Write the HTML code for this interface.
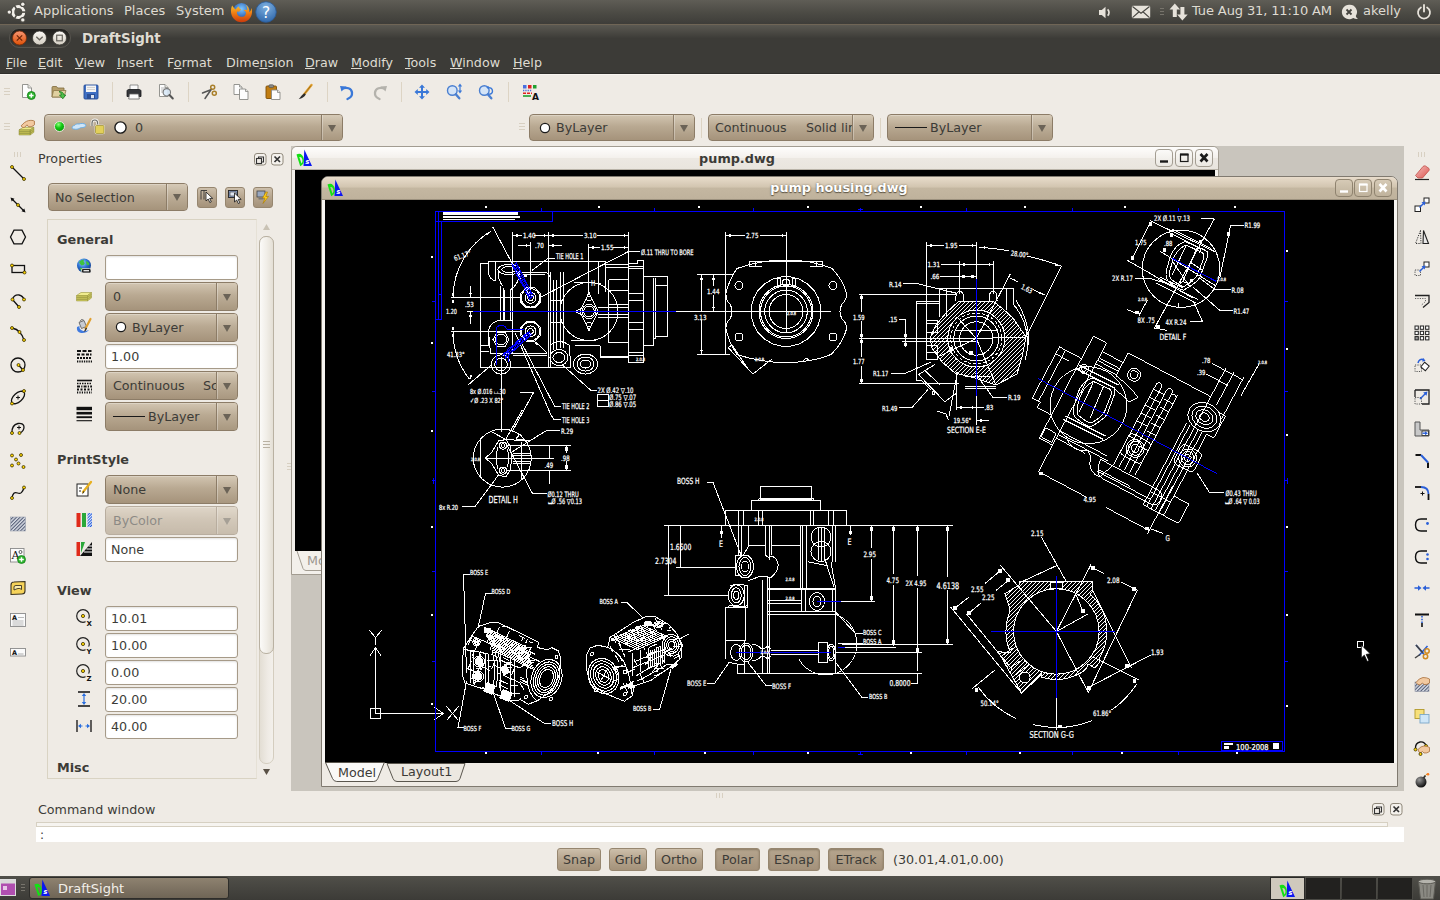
<!DOCTYPE html>
<html><head><meta charset="utf-8"><title>DraftSight</title>
<style>
*{box-sizing:border-box;margin:0;padding:0}
html,body{width:1440px;height:900px;overflow:hidden;background:#efebe5;font-family:"DejaVu Sans","Liberation Sans",sans-serif;font-size:12.7px;color:#3c3b37}
.abs{position:absolute}
#toppanel{left:0;top:0;width:1440px;height:24px;background:linear-gradient(#5f5d56,#4b4a44 55%,#3e3d39);color:#dfdbd2;font-size:13px}
#toppanel span{position:absolute;top:3px;white-space:nowrap}
#titlebar{left:0;top:24px;width:1440px;height:26px;background:linear-gradient(#5b5952,#3c3b37 54%);border-top:1px solid #6f6556}
#titlebar b{position:absolute;left:82px;top:6px;font-size:13.4px;color:#dfdbd2}
#menubar{left:0;top:50px;width:1440px;height:24px;background:#3c3b37;border-bottom:1px solid #2f2e2b;box-shadow:0 1px 0 #f8f5f0;color:#dfdbd2;font-size:12.7px}
#menubar span{position:absolute;top:5px}
#menubar u{text-decoration:underline}
.combo{position:absolute;border:1px solid #8c7c67;border-radius:4px;background:linear-gradient(#d2c5b1,#b9a992 45%,#a5937b);color:#3c3b37;font-size:12.7px;white-space:nowrap;overflow:hidden;box-shadow:inset 0 1px 0 rgba(255,255,255,.25)}
.combo .arr{position:absolute;right:0;top:0;bottom:0;width:21px;border-left:1px solid #8c7c67;box-shadow:inset 1px 0 0 rgba(255,255,255,.3);background:linear-gradient(#d6cab7,#bdae98 45%,#a99880);z-index:2}
.combo .arr:after{content:"";position:absolute;left:6px;top:50%;margin-top:-3px;border:4px solid transparent;border-top:7px solid #6b6357;border-bottom:0}
.combo .t{position:absolute;top:50%;transform:translateY(-50%);margin-top:-.5px}
.inp{position:absolute;border:1px solid #a69a88;border-radius:3px;background:#fff;font-size:12.7px;padding:4px 0 0 5px;box-shadow:inset 0 1px 2px rgba(0,0,0,.12)}
.btn{position:absolute;border:1px solid #96866f;border-radius:3px;background:linear-gradient(#cdbfab,#b5a48d 50%,#a4927a);font-size:12.7px;text-align:center;color:#3c3b37}
.grip-h{position:absolute;width:6px;height:9px;background:repeating-linear-gradient(#d8d0c2 0 1px,transparent 1px 3px)}
.grip-v{position:absolute;width:9px;height:5px;background:repeating-linear-gradient(90deg,#d8d0c2 0 1px,transparent 1px 3px)}
.hd{position:absolute;font-weight:bold;font-size:12.8px;left:57px}
svg{position:absolute;overflow:visible}
</style></head><body>

<!-- TOP PANEL -->
<div id="toppanel" class="abs">
<span style="left:34px">Applications</span><span style="left:124px">Places</span><span style="left:176px">System</span>
<span style="left:1192px;letter-spacing:-0.12px">Tue Aug 31, 11:10 AM</span><span style="left:1363px">akelly</span>
</div>

<!-- TITLE BAR -->
<div id="titlebar" class="abs"><b>DraftSight</b></div>

<!-- MENU BAR -->
<div id="menubar" class="abs">
<span style="left:6px"><u>F</u>ile</span><span style="left:38px"><u>E</u>dit</span><span style="left:75px"><u>V</u>iew</span><span style="left:117px"><u>I</u>nsert</span><span style="left:167px">F<u>o</u>rmat</span><span style="left:226px">Dime<u>n</u>sion</span><span style="left:305px"><u>D</u>raw</span><span style="left:351px"><u>M</u>odify</span><span style="left:405px"><u>T</u>ools</span><span style="left:450px"><u>W</u>indow</span><span style="left:513px"><u>H</u>elp</span>
</div>

<!-- TOOLBAR 2 combos -->
<div class="combo" style="left:44px;top:114px;width:299px;height:27px"><span class="t" style="left:90px">0</span><div class="arr"></div></div>
<div class="combo" style="left:529px;top:114px;width:166px;height:27px"><span class="t" style="left:26px">ByLayer</span><div class="arr"></div></div>
<div class="combo" style="left:708px;top:114px;width:166px;height:27px"><span class="t" style="left:6px">Continuous</span><span class="t" style="left:97px">Solid lin</span><div class="arr"></div></div>
<div class="combo" style="left:887px;top:114px;width:166px;height:27px"><span class="t" style="left:42px">ByLayer</span><div class="arr"></div></div>

<!-- PROPERTIES PANEL -->
<div class="abs" style="left:38px;top:151px;font-size:12.7px">Properties</div>
<div class="combo" style="left:48px;top:183px;width:140px;height:28px"><span class="t" style="left:6px">No Selection</span><div class="arr"></div></div>
<div class="abs" style="left:47px;top:219px;width:210px;height:560px;border:1px solid #d9d3c3;border-right-color:#e6e1d6"></div>
<div class="hd" style="top:232px">General</div>
<div class="inp" style="left:105px;top:255px;width:133px;height:25px"></div>
<div class="combo" style="left:105px;top:282px;width:133px;height:29px"><span class="t" style="left:7px">0</span><div class="arr"></div></div>
<div class="combo" style="left:105px;top:313px;width:133px;height:29px"><span class="t" style="left:26px">ByLayer</span><div class="arr"></div></div>
<div class="inp" style="left:105px;top:344px;width:133px;height:25px">1.00</div>
<div class="combo" style="left:105px;top:371px;width:133px;height:29px"><span class="t" style="left:7px">Continuous</span><span class="t" style="left:97px">Sc</span><div class="arr"></div></div>
<div class="combo" style="left:105px;top:402px;width:133px;height:29px"><span class="t" style="left:42px">ByLayer</span><div class="arr"></div></div>
<div class="hd" style="top:452px">PrintStyle</div>
<div class="combo" style="left:105px;top:475px;width:133px;height:29px"><span class="t" style="left:7px">None</span><div class="arr"></div></div>
<div class="combo" style="left:105px;top:506px;width:133px;height:29px;opacity:.55"><span class="t" style="left:7px">ByColor</span><div class="arr"></div></div>
<div class="inp" style="left:105px;top:537px;width:133px;height:25px">None</div>
<div class="hd" style="top:583px">View</div>
<div class="inp" style="left:105px;top:606px;width:133px;height:25px">10.01</div>
<div class="inp" style="left:105px;top:633px;width:133px;height:25px">10.00</div>
<div class="inp" style="left:105px;top:660px;width:133px;height:25px">0.00</div>
<div class="inp" style="left:105px;top:687px;width:133px;height:25px">20.00</div>
<div class="inp" style="left:105px;top:714px;width:133px;height:25px">40.00</div>
<div class="hd" style="top:760px">Misc</div>

<!-- MDI AREA -->
<div class="abs" style="left:291px;top:146px;width:1113px;height:645px;background:#c9c5bd"></div>
<!-- pump.dwg window -->
<div class="abs" style="left:291px;top:146px;width:928px;height:429px;background:#f3f0eb;border:1px solid #a29c91;border-radius:6px 6px 0 0"></div>
<div class="abs" style="left:292px;top:147px;width:926px;height:23px;background:linear-gradient(#fefdfc,#f4f1ed 48%,#ece8e2 52%,#e9e5de);border-bottom:1px solid #b9b3a8;border-radius:5px 5px 0 0;text-align:center;font-weight:bold;font-size:12.8px;padding-top:4px;padding-right:36px">pump.dwg</div>
<div class="abs" style="left:295px;top:170px;width:920px;height:381px;background:#000"></div>
<svg style="left:296px;top:148.5px" width="17" height="18" viewBox="0 0 17 18"><path d="M8.300 0.500l7.700 16.500h-8.500z" fill="#0a18f0"/><path d="M0.500 5.500c3.500-2 6.500 0 7.300 4.500 0.600 3.500-0.800 6-3.600 7.300zM3.300 8l2.200 6.500c1-1.200 1.200-2.800 0.700-4.500-0.500-1.500-1.500-2.300-2.900-2z" fill="#14e014" fill-rule="evenodd"/><text x="9.300" y="15" font-size="7" font-weight="bold" font-style="italic" fill="#fff" font-family="DejaVu Sans,Liberation Sans,sans-serif">s</text></svg><div class="abs" style="left:1155px;top:149px;width:18px;height:18px;border:1px solid #a39d92;border-radius:4px;background:linear-gradient(#fbfaf8,#ebe8e2)"><svg style="left:-1px;top:-1px" width="17" height="17" viewBox="0 0 17 17"><path d="M5 12.500h8" stroke="#1a1a1a" stroke-width="2.400"/></svg></div><div class="abs" style="left:1174.8px;top:149px;width:18px;height:18px;border:1px solid #a39d92;border-radius:4px;background:linear-gradient(#fbfaf8,#ebe8e2)"><svg style="left:-1px;top:-1px" width="17" height="17" viewBox="0 0 17 17"><rect x="5.500" y="5.500" width="7.500" height="7" fill="none" stroke="#1a1a1a" stroke-width="1.200"/><path d="M5 5.500h8.500" stroke="#1a1a1a" stroke-width="2.200"/></svg></div><div class="abs" style="left:1194.6px;top:149px;width:18px;height:18px;border:1px solid #a39d92;border-radius:4px;background:linear-gradient(#fbfaf8,#ebe8e2)"><svg style="left:-1px;top:-1px" width="17" height="17" viewBox="0 0 17 17"><path d="M5.500 5l7 7.500m0-7.500l-7 7.500" stroke="#1a1a1a" stroke-width="2.600"/></svg></div>
<svg style="left:295px;top:551px" width="30" height="22" viewBox="0 0 30 22"><path d="M2 0l6 17.500q1 2 3 2h19" fill="none" stroke="#a39d92" stroke-width="1"/></svg>
<div class="abs" style="left:307px;top:553px;font-size:12.7px;color:#9a968e;width:14px;overflow:hidden">Mo</div>
<!-- pump housing.dwg window -->
<div class="abs" style="left:321px;top:176px;width:1077px;height:611px;background:#efebe5;border:1px solid #807a70;border-radius:7px 7px 0 0"></div>
<div class="abs" style="left:322px;top:177px;width:1075px;height:23px;background:linear-gradient(#e8dccb,#d2c5b0 46%,#c4b7a1 50%,#bfb29c);border-bottom:1px solid #9b907d;border-radius:6px 6px 0 0;text-align:center;font-weight:bold;font-size:12.8px;color:#fff;padding-top:3px;padding-right:41px;text-shadow:0 1px 1px #5e5545,0 0 2px #7a6f5c">pump housing.dwg</div>
<div class="abs" style="left:322px;top:200px;width:1075px;height:563px;background:#f8f6f2"></div>
<div id="canvas" class="abs" style="left:325px;top:200px;width:1069px;height:562.5px;background:#000"></div>
<svg style="left:326.5px;top:178.5px" width="17" height="18" viewBox="0 0 17 18"><path d="M8.300 0.500l7.700 16.500h-8.500z" fill="#0a18f0"/><path d="M0.500 5.500c3.500-2 6.500 0 7.300 4.500 0.600 3.500-0.800 6-3.600 7.300zM3.300 8l2.200 6.500c1-1.200 1.200-2.800 0.700-4.500-0.500-1.500-1.500-2.300-2.900-2z" fill="#14e014" fill-rule="evenodd"/><text x="9.300" y="15" font-size="7" font-weight="bold" font-style="italic" fill="#fff" font-family="DejaVu Sans,Liberation Sans,sans-serif">s</text></svg><div class="abs" style="left:1334.5px;top:179px;width:18px;height:18px;border:1px solid #8f836f;border-radius:4px;background:linear-gradient(#d6cab6,#bfb29c)"><svg style="left:-1px;top:-1px" width="17" height="17" viewBox="0 0 17 17"><path d="M5 12.500h8" stroke="#fff" stroke-width="2.400"/></svg></div><div class="abs" style="left:1354.3px;top:179px;width:18px;height:18px;border:1px solid #8f836f;border-radius:4px;background:linear-gradient(#d6cab6,#bfb29c)"><svg style="left:-1px;top:-1px" width="17" height="17" viewBox="0 0 17 17"><rect x="5.500" y="5.500" width="7.500" height="7" fill="none" stroke="#fff" stroke-width="1.200"/><path d="M5 5.500h8.500" stroke="#fff" stroke-width="2.200"/></svg></div><div class="abs" style="left:1374.1px;top:179px;width:18px;height:18px;border:1px solid #8f836f;border-radius:4px;background:linear-gradient(#d6cab6,#bfb29c)"><svg style="left:-1px;top:-1px" width="17" height="17" viewBox="0 0 17 17"><path d="M5.500 5l7 7.500m0-7.500l-7 7.500" stroke="#fff" stroke-width="2.600"/></svg></div>
<svg style="left:324px;top:762px" width="150" height="24" viewBox="0 0 150 24"><path d="M63 1.500h78l-5 15q-1 3-4 3h-59q-3 0-4-3z" fill="#ece8e1" stroke="#5a564e" stroke-width="1"/><path d="M1.500 0.500l7 16q1.300 3 4.300 3h37q3 0 4-3l6.500-16z" fill="#faf9f7" stroke="#5a564e" stroke-width="1"/></svg>
<div class="abs" style="left:338px;top:764.5px;font-size:12.7px">Model</div>
<div class="abs" style="left:401px;top:764px;font-size:12.7px">Layout1</div>
<div class="grip-v" style="left:716px;top:793px"></div>
<div class="abs" style="left:287px;top:463px;width:4px;height:9px;background:repeating-linear-gradient(#d8d0c2 0 1px,transparent 1px 3px)"></div>

<!-- COMMAND WINDOW -->
<div class="abs" style="left:38px;top:802px;font-size:12.7px">Command window</div>
<div class="abs" style="left:36px;top:822px;width:1352px;height:5px;border:1px solid #d6d0c2;background:#f6f4f0"></div>
<div class="abs" style="left:36px;top:827px;width:1368px;height:15px;background:#fff;font-size:12px;line-height:17px;padding-left:4px">:</div>

<!-- STATUS BAR -->
<div class="btn" style="left:557px;top:848px;width:44px;height:23px;padding-top:3px">Snap</div>
<div class="btn" style="left:609px;top:848px;width:38px;height:23px;padding-top:3px">Grid</div>
<div class="btn" style="left:655px;top:848px;width:48px;height:23px;padding-top:3px">Ortho</div>
<div class="btn" style="background:linear-gradient(#b5a58e,#ad9c85 50%,#a3917a);box-shadow:inset 0 1px 2px rgba(60,45,25,.35);left:715px;top:848px;width:45px;height:23px;padding-top:3px">Polar</div>
<div class="btn" style="background:linear-gradient(#b5a58e,#ad9c85 50%,#a3917a);box-shadow:inset 0 1px 2px rgba(60,45,25,.35);left:768px;top:848px;width:52px;height:23px;padding-top:3px">ESnap</div>
<div class="btn" style="background:linear-gradient(#b5a58e,#ad9c85 50%,#a3917a);box-shadow:inset 0 1px 2px rgba(60,45,25,.35);left:828px;top:848px;width:56px;height:23px;padding-top:3px">ETrack</div>
<div class="abs" style="left:893px;top:852px;font-size:12.7px">(30.01,4.01,0.00)</div>

<!-- BOTTOM PANEL -->
<div class="abs" style="left:0;top:876px;width:1440px;height:24px;background:linear-gradient(#504f49,#3c3b37)"></div>
<div class="abs" style="left:29px;top:877px;width:200px;height:22px;border-radius:3px;background:linear-gradient(#8e8270,#6f6556);border:1px solid #2e2d2a"></div>
<div class="abs" style="left:58px;top:880.5px;font-size:13px;color:#f2efe9">DraftSight</div>



<!-- ICONS -->
<svg style="left:0px;top:0px" width="30" height="24" viewBox="0 0 30 24"><circle cx="18.3" cy="12.1" r="5.500" fill="none" stroke="#f2efe9" stroke-width="3"/><path d="M21.80 12.10L26.30 12.10" stroke="#4e4c46" stroke-width="1.600"/><path d="M16.55 9.07L14.30 5.17" stroke="#4e4c46" stroke-width="1.600"/><path d="M16.55 15.13L14.30 19.03" stroke="#4e4c46" stroke-width="1.600"/><circle cx="9.30" cy="12.10" r="2.800" fill="#4e4c46"/><circle cx="9.30" cy="12.10" r="1.700" fill="#f2efe9"/><circle cx="22.80" cy="4.31" r="2.800" fill="#4e4c46"/><circle cx="22.80" cy="4.31" r="1.700" fill="#f2efe9"/><circle cx="22.80" cy="19.89" r="2.800" fill="#4e4c46"/><circle cx="22.80" cy="19.89" r="1.700" fill="#f2efe9"/></svg>
<svg style="left:229px;top:0px" width="24" height="24" viewBox="0 0 24 24"><defs><radialGradient id="ffg" cx=".5" cy=".35" r=".6"><stop offset="0" stop-color="#7fc8ff"/><stop offset="1" stop-color="#1c4fa8"/></radialGradient><linearGradient id="ffo" x1="0" y1="0" x2="0" y2="1"><stop offset="0" stop-color="#f7c530"/><stop offset=".5" stop-color="#ee7a12"/><stop offset="1" stop-color="#c93a0c"/></linearGradient></defs><circle cx="12.5" cy="11.5" r="8.6" fill="url(#ffg)"/><path d="M3.2 5.5c-2 4-1.600 9.500 1.600 13.200 3.600 4.200 10.200 4.700 14.400 1.300 3.600-3 4.700-7.800 3.200-12-.2 2-1 3.300-2 4.300.3-3.200-1.300-6.200-4-7.600 1.600 1.700 2.200 3.800 1.800 5.500-1.200-.6-2.800-.5-3.800.4 1.800.2 2.800 1.600 2.400 3.300-.5 2.200-3 3.400-5.400 2.800-2.600-.7-3.900-3-3.400-5.200l2.200.3c.4-.9 1.200-1.700 2-2.100-1.300-.5-2.300-1.800-2.300-3.100-1.400.6-2.500 1.700-3 3-1-.8-2.700-2.200-3.700-4.100z" fill="url(#ffo)"/></svg>
<svg style="left:255px;top:1px" width="22" height="22" viewBox="0 0 22 22"><defs><radialGradient id="hpg" cx=".5" cy=".25" r=".8"><stop offset="0" stop-color="#7eb0e0"/><stop offset="1" stop-color="#2c64a8"/></radialGradient></defs><circle cx="11" cy="11" r="10.3" fill="url(#hpg)" stroke="#2a5a98" stroke-width=".8"/><text x="11" y="16.5" text-anchor="middle" font-family="DejaVu Sans,Liberation Sans,sans-serif" font-size="15.5" fill="#fff">?</text></svg>
<svg style="left:1098px;top:5px" width="15" height="15" viewBox="0 0 15 15"><path d="M1 5h2.800l3.700-3.300v11.600l-3.700-3.300h-2.800z" fill="#e6e2da"/><path d="M9.600 4.300a4.300 4.300 0 0 1 0 6.400" fill="none" stroke="#e6e2da" stroke-width="1.700"/></svg>
<svg style="left:1131px;top:5px" width="20" height="14" viewBox="0 0 20 14"><rect x=".8" y=".8" width="18.400" height="12.400" rx="1.200" fill="#e6e2da"/><path d="M1.500 1.500l8.500 6.700 8.500-6.700M1.500 12.600l6.300-5.600M18.500 12.600l-6.300-5.600" fill="none" stroke="#45443f" stroke-width="1.100"/></svg>
<div class="abs" style="left:1160px;top:8px;width:4px;height:9px;background:repeating-linear-gradient(#77746c 0 1px,transparent 1px 3px)"></div>
<svg style="left:1169px;top:3px" width="19" height="18" viewBox="0 0 19 18"><path d="M5.800 .5l5.300 6h-3.300v7.500h-4v-7.500h-3.300zM13.400 17.500l-5.300-6h3.300v-7.500h4v7.500h3.300z" fill="#e6e2da"/></svg>
<svg style="left:1341px;top:4px" width="18" height="17" viewBox="0 0 18 17"><path d="M8 .8a7.200 7.200 0 1 0 4.200 13.100c1.400.9 3 1.300 5 1.100-1.300-.8-2-1.900-2.400-3.100a7.200 7.200 0 0 0-6.800-11.100z" fill="#e6e2da"/><path d="M5.500 5.500l5 5m0-5l-5 5" stroke="#45443f" stroke-width="1.800"/></svg>
<svg style="left:1416px;top:4px" width="16" height="16" viewBox="0 0 16 16"><path d="M4.900 3.500a6 6 0 1 0 6.200 0" fill="none" stroke="#e6e2da" stroke-width="1.800" stroke-linecap="round"/><path d="M8 1v6.500" stroke="#e6e2da" stroke-width="1.900" stroke-linecap="round"/></svg>
<svg style="left:9px;top:28px" width="62" height="20" viewBox="0 0 62 20"><defs><linearGradient id="tbp" x1="0" y1="0" x2="0" y2="1"><stop offset="0" stop-color="#1f1e1c"/><stop offset="1" stop-color="#403f3a"/></linearGradient><linearGradient id="tbc" x1="0" y1="0" x2="0" y2="1"><stop offset="0" stop-color="#f79674"/><stop offset="1" stop-color="#df5106"/></linearGradient><linearGradient id="tbm" x1="0" y1="0" x2="0" y2="1"><stop offset="0" stop-color="#fbf9f6"/><stop offset="1" stop-color="#d3cdc1"/></linearGradient></defs><rect x=".5" y=".5" width="61" height="19" rx="9.500" fill="url(#tbp)" stroke="#5e5c55" stroke-width=".8"/><circle cx="10.500" cy="10" r="7" fill="url(#tbc)" stroke="#7a2c08" stroke-width=".8"/><path d="M7.800 7.300l5.400 5.400m0-5.400l-5.400 5.400" stroke="#6b2408" stroke-width="1.200"/><circle cx="30.500" cy="10" r="7" fill="url(#tbm)" stroke="#3a3934" stroke-width=".8"/><path d="M27.300 8.800l3.200 3 3.200-3" fill="none" stroke="#66635c" stroke-width="1.300"/><circle cx="50.500" cy="10" r="7" fill="url(#tbm)" stroke="#3a3934" stroke-width=".8"/><rect x="47.700" y="7.200" width="5.600" height="5.600" fill="none" stroke="#66635c" stroke-width="1.200"/></svg>
<div class="grip-h" style="left:4px;top:88px"></div>
<div class="grip-h" style="left:4px;top:123px"></div>
<div class="abs" style="left:112px;top:82px;width:1px;height:20px;background:#ddd4c4"></div>
<div class="abs" style="left:188px;top:82px;width:1px;height:20px;background:#ddd4c4"></div>
<div class="abs" style="left:327px;top:82px;width:1px;height:20px;background:#ddd4c4"></div>
<div class="abs" style="left:401px;top:82px;width:1px;height:20px;background:#ddd4c4"></div>
<div class="abs" style="left:508px;top:82px;width:1px;height:20px;background:#ddd4c4"></div>
<svg style="left:20.0px;top:84.0px" width="16" height="16" viewBox="0 0 16 16"><path d="M2.5 0.5h5.5l3.5 3.5v9.5h-9z" fill="#fdfdfd" stroke="#8a8a86" stroke-width=".9"/><path d="M8.0 0.5v3.5h3.5" fill="#e4e4e0" stroke="#8a8a86" stroke-width=".8"/><circle cx="11.300" cy="11.500" r="4" fill="#2fb52f" stroke="#0f7a14" stroke-width=".8"/><path d="M11.300 9.200v4.600M9 11.500h4.600" stroke="#fff" stroke-width="1.500"/></svg>
<svg style="left:51.0px;top:84.0px" width="16" height="16" viewBox="0 0 16 16"><path d="M1 3.500c0-.6.400-1 1-1h3.500l1.200 1.500h6.300v9h-12z" fill="#b7a06c" stroke="#7d6a3c" stroke-width=".8"/><path d="M2.500 6.500h12.500l-2 6.500h-12z" fill="#e0d0a0" stroke="#8a7648" stroke-width=".8"/><path d="M8 7.500c2.500 0 4.500 1 5 3.500h1.800l-3 3.800-3.300-3.800h1.900c-.2-1.600-1-2.500-2.400-3.500z" fill="#4fc04a" stroke="#1d7a22" stroke-width=".8"/></svg>
<svg style="left:83.0px;top:84.0px" width="16" height="16" viewBox="0 0 16 16"><rect x="1" y="1" width="14" height="14" rx="1" fill="#3f6fc4" stroke="#244a94" stroke-width=".9"/><rect x="3" y="1.500" width="10" height="6.500" fill="#f4f4f4"/><path d="M4 3.500h8M4 5.500h8" stroke="#c9c9c9" stroke-width=".8"/><rect x="4" y="10" width="8" height="5" fill="#2b4f96"/><rect x="8" y="11" width="3" height="3.200" fill="#dfe6f2"/></svg>
<svg style="left:126.0px;top:84.0px" width="16" height="16" viewBox="0 0 16 16"><path d="M4 1h8v5h-8z" fill="#fafafa" stroke="#777" stroke-width=".8"/><path d="M1 7.200c0-1 .8-1.700 1.700-1.700h10.600c1 0 1.700.8 1.700 1.700v5.300h-14z" fill="#34363a" stroke="#17181a" stroke-width=".8"/><path d="M3.500 10h9l.8 5h-10.600z" fill="#fdfdfd" stroke="#666" stroke-width=".8"/></svg>
<svg style="left:158.0px;top:84.0px" width="16" height="16" viewBox="0 0 16 16"><path d="M1.5 0.5h5.5l3 3v9h-8.5z" fill="#fdfdfd" stroke="#8a8a86" stroke-width=".9"/><path d="M7.0 0.5v3h3" fill="#e4e4e0" stroke="#8a8a86" stroke-width=".8"/><path d="M3 4h4M3 6h3M3 8h3" stroke="#aaa" stroke-width=".8"/><circle cx="8.800" cy="8.300" r="3.700" fill="#d6e6f6" fill-opacity=".85" stroke="#777" stroke-width="1.100"/><path d="M11.500 11l3.300 3.500" stroke="#555" stroke-width="2" stroke-linecap="round"/></svg>
<svg style="left:201.0px;top:84.0px" width="16" height="16" viewBox="0 0 16 16"><path d="M1.500 9l9-3.500M4 14.500l6.500-9.500" stroke="#555" stroke-width="1.500" stroke-linecap="round"/><circle cx="11.700" cy="3.300" r="2" fill="none" stroke="#a97f2a" stroke-width="1.500"/><circle cx="13.300" cy="9.300" r="2" fill="none" stroke="#a97f2a" stroke-width="1.500"/></svg>
<svg style="left:233.0px;top:84.0px" width="16" height="16" viewBox="0 0 16 16"><path d="M1 0.5h5.5l2.5 2.5v7.5h-8z" fill="#fdfdfd" stroke="#8a8a86" stroke-width=".9"/><path d="M6.5 0.5v2.5h2.5" fill="#e4e4e0" stroke="#8a8a86" stroke-width=".8"/><path d="M6.5 5h6.0l2.5 2.5v8.0h-8.5z" fill="#fdfdfd" stroke="#8a8a86" stroke-width=".9"/><path d="M12.5 5v2.5h2.5" fill="#e4e4e0" stroke="#8a8a86" stroke-width=".8"/></svg>
<svg style="left:265.0px;top:84.0px" width="16" height="16" viewBox="0 0 16 16"><rect x="1" y="2" width="10.500" height="12.500" rx="1" fill="#c17d11" stroke="#7e4f08" stroke-width=".9"/><rect x="4" y=".8" width="4.500" height="2.800" rx=".8" fill="#8a8a86" stroke="#555" stroke-width=".7"/><path d="M6.5 6h6.0l2.5 2.5v7.0h-8.5z" fill="#fdfdfd" stroke="#8a8a86" stroke-width=".9"/><path d="M12.5 6v2.5h2.5" fill="#e4e4e0" stroke="#8a8a86" stroke-width=".8"/></svg>
<svg style="left:297.0px;top:84.0px" width="16" height="16" viewBox="0 0 16 16"><path d="M14.500 1l-7.500 9.500" stroke="#e0a030" stroke-width="2.400" stroke-linecap="round"/><path d="M14 1.500l-7 9" stroke="#8a5a10" stroke-width=".7"/><path d="M7.600 9.300l1.200 1.200c-1.500 2.500-3.800 4-7 4.500 1.800-1.500 2.300-3.700 5.800-5.700z" fill="#2e2e2e"/></svg>
<svg style="left:339.0px;top:84.0px" width="16" height="16" viewBox="0 0 16 16"><path d="M3.500 4.500c4-1.500 9-.5 9.500 4 .4 3.500-2 5.500-4.500 6.500" fill="none" stroke="#3a78d8" stroke-width="2.300" stroke-linecap="round"/><path d="M1 2l6.500.5-5 5z" fill="#3a78d8"/></svg>
<svg style="left:372.0px;top:84.0px" width="16" height="16" viewBox="0 0 16 16"><path d="M12.500 4.500c-4-1.500-9-.5-9.500 4-.4 3.500 2 5.500 4.500 6.500" fill="none" stroke="#b4b2ac" stroke-width="2.300" stroke-linecap="round"/><path d="M15 2l-6.500.5 5 5z" fill="#b4b2ac"/></svg>
<svg style="left:414.0px;top:84.0px" width="16" height="16" viewBox="0 0 16 16"><path d="M8 .5l3 3.300h-2v3.200h3.200v-2l3.300 3-3.300 3v-2h-3.200v3.200h2l-3 3.300-3-3.300h2v-3.200h-3.200v2l-3.300-3 3.300-3v2h3.200v-3.200h-2z" fill="#3a78d8"/></svg>
<svg style="left:446.0px;top:84.0px" width="16" height="16" viewBox="0 0 16 16"><circle cx="6.300" cy="6.500" r="4.800" fill="#d4e4f7" stroke="#4a7fd0" stroke-width="1.400"/><path d="M9.800 10.300l3.500 4" stroke="#4a7fd0" stroke-width="2.400" stroke-linecap="round"/><path d="M14 1v7M12.500 2.500l1.500-2 1.500 2M12.500 6.500l1.500 2 1.500-2" stroke="#3a78d8" stroke-width="1.200" fill="none"/></svg>
<svg style="left:478.0px;top:84.0px" width="16" height="16" viewBox="0 0 16 16"><circle cx="6.300" cy="6.500" r="4.800" fill="#d4e4f7" stroke="#4a7fd0" stroke-width="1.400"/><path d="M9.800 10.300l3.500 4" stroke="#4a7fd0" stroke-width="2.400" stroke-linecap="round"/><path d="M9.500 4c2.500-1 5 .500 5 3s-2 3.500-4 3" stroke="#3a78d8" stroke-width="1.400" fill="none"/><path d="M8 3l3-.8-.5 3z" fill="#3a78d8"/></svg>
<svg style="left:522.0px;top:84.0px" width="16" height="16" viewBox="0 0 16 16"><rect x="1" y="1" width="3.500" height="3.500" fill="#4a6fe0"/><rect x="6" y="1" width="3.500" height="3.500" fill="#e02020"/><rect x="11" y="1" width="3.500" height="3.500" fill="#20a030"/><path d="M1 6.500h9" stroke="#4a6fe0" stroke-width="1.300" stroke-dasharray="1.300 1"/><path d="M1 9.200h9" stroke="#e02020" stroke-width="1.500" stroke-dasharray="3 1"/><path d="M1 12h8" stroke="#20a030" stroke-width="1.600"/><text x="10" y="16" font-family="DejaVu Sans,Liberation Sans,sans-serif" font-weight="bold" font-size="9" fill="#111">A</text></svg>
<svg style="left:18.0px;top:119.0px" width="18" height="18" viewBox="0 0 17 17"><path d="M1 13.5l4-2.500h10l-3.500 2.500z" fill="#eeea88" stroke="#8f8c3a" stroke-width=".6"/><path d="M1 13.5v1.600h10.500v-1.600zM11.500 13.5l3.500-2.500v1.600l-3.500 2.500z" fill="#c9c55a" stroke="#8f8c3a" stroke-width=".5"/><path d="M1 11.9l4-2.500h10l-3.500 2.500z" fill="#eeea88" stroke="#8f8c3a" stroke-width=".6"/><path d="M1 11.9v1.600h10.500v-1.600zM11.500 11.9l3.500-2.500v1.600l-3.500 2.500z" fill="#c9c55a" stroke="#8f8c3a" stroke-width=".5"/><path d="M1 10.3l4-2.500h10l-3.500 2.500z" fill="#eeea88" stroke="#8f8c3a" stroke-width=".6"/><path d="M1 10.3v1.600h10.500v-1.600zM11.500 10.3l3.500-2.500v1.600l-3.500 2.500z" fill="#c9c55a" stroke="#8f8c3a" stroke-width=".5"/><path d="M3 6.500c2-2.500 4.500-4.500 7-5 2-.3 4.500-.3 5.500.5v3.500c-1.500 1.500-3.500 2-5.500 1.800l-1.500-1.800-2.500 2.500c-1 .3-2.500-.3-3-1.500z" fill="#f2c9a0" stroke="#a8703c" stroke-width=".8"/></svg>
<svg style="left:52px;top:119px" width="16" height="16" viewBox="0 0 16 16"><defs><radialGradient id="grn" cx=".4" cy=".3" r=".7"><stop offset="0" stop-color="#8cff7a"/><stop offset=".5" stop-color="#12c812"/><stop offset="1" stop-color="#0a9a0a"/></radialGradient></defs><circle cx="7.500" cy="7.500" r="5" fill="url(#grn)" stroke="#e9e4da" stroke-width="1"/></svg>
<svg style="left:71px;top:121px" width="16" height="12" viewBox="0 0 16 12"><path d="M1.500 7.500c-1-1.500.5-3 2-3 1-1.500 3-1.800 4.500-1.500 2-.8 5-.8 6.500.5.800 1 0 2.500-1.500 2.800-1.500.3-3.500.3-4.500 1-1.500 1-3.500 1.200-5 .8-1 0-1.700-.2-2-.600z" fill="#cfe5f7" stroke="#6aaee6" stroke-width="1"/></svg>
<svg style="left:90px;top:118px" width="16" height="18" viewBox="0 0 16 18"><path d="M2 8v-3c0-2 1.200-3 2.800-3s2.800 1 2.800 3v1.500" fill="none" stroke="#f3f1ec" stroke-width="2.800"/><path d="M2 8v-3c0-2 1.200-3 2.800-3s2.800 1 2.800 3v1.500" fill="none" stroke="#6e6e6a" stroke-width="1.200"/><rect x="5.500" y="7.500" width="8.500" height="8" rx="1" fill="#e2cf5a" stroke="#f3f1ec" stroke-width="1.600"/><rect x="5.500" y="7.500" width="8.500" height="8" rx="1" fill="#e2cf5a" stroke="#9a8a28" stroke-width=".7"/></svg>
<svg style="left:113px;top:120px" width="15" height="15" viewBox="0 0 15 15"><circle cx="7.500" cy="7.500" r="5.600" fill="#fff" stroke="#1a1a1a" stroke-width="1.400"/></svg>
<svg style="left:538px;top:121px" width="14" height="14" viewBox="0 0 14 14"><circle cx="7" cy="7" r="4.600" fill="#fff" stroke="#1a1a1a" stroke-width="1.200"/></svg>
<div class="abs" style="left:895px;top:127px;width:32px;height:1px;background:#1a1a1a"></div>
<div class="abs" style="left:701px;top:118px;width:1px;height:20px;background:#ddd4c4"></div>
<div class="abs" style="left:880px;top:118px;width:1px;height:20px;background:#ddd4c4"></div>
<div class="grip-h" style="left:519px;top:123px"></div>

<!-- TOOL STRIPS -->
<div class="grip-v" style="left:14px;top:152px"></div>
<div class="grip-v" style="left:1418px;top:152px"></div>
<svg style="left:10px;top:165px" width="16" height="16" viewBox="0 0 16 16"><path d="M2 2L14 14" stroke="#111" stroke-width="1.300" fill="none"/><circle cx="2" cy="2" r="1.500" fill="#ffd500" stroke="#3a3000" stroke-width=".8"/><circle cx="14" cy="14" r="1.500" fill="#ffd500" stroke="#3a3000" stroke-width=".8"/></svg>
<svg style="left:10px;top:197px" width="16" height="16" viewBox="0 0 16 16"><path d="M1.500 1.500L14.500 14.500" stroke="#111" stroke-width="1.300" fill="none"/><path d="M0.500 0.500l4 1.200-2.800 2.800zM15.500 15.500l-4-1.200 2.800-2.800z" fill="#111"/><circle cx="8" cy="8" r="1.500" fill="#ffd500" stroke="#3a3000" stroke-width=".8"/></svg>
<svg style="left:10px;top:229px" width="16" height="16" viewBox="0 0 16 16"><path d="M0.500 8L4 1.200h8L15.500 8L12 14.800h-8z" stroke="#111" stroke-width="1.300" fill="none"/></svg>
<svg style="left:10px;top:261px" width="16" height="16" viewBox="0 0 16 16"><rect x="2" y="4.500" width="12.500" height="7" stroke="#111" stroke-width="1.300" fill="none"/><circle cx="2" cy="4.5" r="1.500" fill="#ffd500" stroke="#3a3000" stroke-width=".8"/><circle cx="14.5" cy="11.5" r="1.500" fill="#ffd500" stroke="#3a3000" stroke-width=".8"/></svg>
<svg style="left:10px;top:293px" width="16" height="16" viewBox="0 0 16 16"><path d="M2.500 6.500Q4 1.500 9 2Q13 3 14 6.500M2.500 6.500L9 14" stroke="#111" stroke-width="1.300" fill="none"/><circle cx="2.5" cy="6.5" r="1.500" fill="#ffd500" stroke="#3a3000" stroke-width=".8"/><circle cx="14" cy="6.5" r="1.500" fill="#ffd500" stroke="#3a3000" stroke-width=".8"/><circle cx="9" cy="14" r="1.500" fill="#ffd500" stroke="#3a3000" stroke-width=".8"/></svg>
<svg style="left:10px;top:325px" width="16" height="16" viewBox="0 0 16 16"><path d="M2 3Q7 4 9.500 7Q12.500 10 14 15" stroke="#111" stroke-width="1.300" fill="none"/><circle cx="2" cy="3" r="1.500" fill="#ffd500" stroke="#3a3000" stroke-width=".8"/><circle cx="9.5" cy="7" r="1.500" fill="#ffd500" stroke="#3a3000" stroke-width=".8"/><circle cx="14" cy="15" r="1.500" fill="#ffd500" stroke="#3a3000" stroke-width=".8"/></svg>
<svg style="left:10px;top:357px" width="16" height="16" viewBox="0 0 16 16"><circle cx="8" cy="8" r="7" stroke="#111" stroke-width="1.300" fill="none"/><path d="M8.500 8L13 13" stroke="#111" stroke-width="1.300" fill="none"/><circle cx="8.5" cy="8" r="1.500" fill="#ffd500" stroke="#3a3000" stroke-width=".8"/><circle cx="13" cy="13" r="1.500" fill="#ffd500" stroke="#3a3000" stroke-width=".8"/></svg>
<svg style="left:10px;top:389px" width="16" height="16" viewBox="0 0 16 16"><ellipse cx="8" cy="8.500" rx="8" ry="4.300" transform="rotate(-42 8 8.500)" stroke="#111" stroke-width="1.300" fill="none"/><path d="M8 6.500v4M6 8.500h4" stroke="#111" stroke-width="1"/><circle cx="14" cy="2" r="1.500" fill="#ffd500" stroke="#3a3000" stroke-width=".8"/><circle cx="2" cy="14.5" r="1.500" fill="#ffd500" stroke="#3a3000" stroke-width=".8"/></svg>
<svg style="left:10px;top:421px" width="16" height="16" viewBox="0 0 16 16"><path d="M2 12Q1.500 4 8 2.500Q14 2 14 6Q14 10 10 12" stroke="#111" stroke-width="1.300" fill="none"/><path d="M9 4.500v4M7 6.500h4" stroke="#111" stroke-width="1"/><circle cx="2" cy="12" r="1.500" fill="#ffd500" stroke="#3a3000" stroke-width=".8"/><circle cx="9.5" cy="12" r="1.500" fill="#ffd500" stroke="#3a3000" stroke-width=".8"/></svg>
<svg style="left:10px;top:453px" width="16" height="16" viewBox="0 0 16 16"><circle cx="2" cy="2.5" r="1.500" fill="#ffd500" stroke="#3a3000" stroke-width=".8"/><circle cx="11" cy="2" r="1.500" fill="#ffd500" stroke="#3a3000" stroke-width=".8"/><circle cx="2" cy="12.5" r="1.500" fill="#ffd500" stroke="#3a3000" stroke-width=".8"/><circle cx="8.5" cy="10.5" r="1.500" fill="#ffd500" stroke="#3a3000" stroke-width=".8"/><circle cx="13.5" cy="14" r="1.500" fill="#ffd500" stroke="#3a3000" stroke-width=".8"/><circle cx="6" cy="6.5" r="1.500" fill="#ffd500" stroke="#3a3000" stroke-width=".8"/></svg>
<svg style="left:10px;top:485px" width="16" height="16" viewBox="0 0 16 16"><path d="M2 13Q3 6 7.500 8Q12 10 14 2.500" stroke="#111" stroke-width="1.300" fill="none"/><circle cx="2" cy="13" r="1.500" fill="#ffd500" stroke="#3a3000" stroke-width=".8"/><circle cx="14" cy="2.5" r="1.500" fill="#ffd500" stroke="#3a3000" stroke-width=".8"/></svg>
<svg style="left:10px;top:516px" width="16" height="16" viewBox="0 0 16 16"><defs><pattern id="hat" width="2.500" height="2.500" patternUnits="userSpaceOnUse" patternTransform="rotate(-45)"><rect width="2.500" height="2.500" fill="#d5d9e2"/><rect width="2.500" height="1" fill="#4d5670"/></pattern></defs><rect x=".5" y="1" width="15" height="14" fill="url(#hat)" stroke="#9aa0b0" stroke-width=".6"/></svg>
<svg style="left:10px;top:548px" width="16" height="16" viewBox="0 0 16 16"><rect x=".5" y=".5" width="13.500" height="13.500" fill="#fbfbfb" stroke="#8a8a8a" stroke-width=".9"/><text x="1.500" y="11" font-size="11" font-family="DejaVu Serif,Liberation Serif,serif" fill="#111">A</text><circle cx="10.500" cy="4" r="1.500" fill="none" stroke="#333" stroke-width=".8"/><circle cx="11.500" cy="11.500" r="4" fill="#2fb52f" stroke="#0f7a14" stroke-width=".7"/><path d="M11.500 9.200v4.600M9.200 11.500h4.600" stroke="#fff" stroke-width="1.400"/></svg>
<svg style="left:10px;top:580px" width="16" height="16" viewBox="0 0 16 16"><path d="M1 5Q1 2 4 2L15 1.500L15 11Q15 14 12 14L1 14.500z" fill="#f6d35a" stroke="#3a3320" stroke-width="1.100"/><path d="M4 10L4 7Q4 5.500 6 5.500L11.500 5.500L11.500 9.500Q10 8 8 8.500Q6 9 4 10z" fill="#fbeeb0" stroke="#3a3320" stroke-width=".9"/></svg>
<svg style="left:10px;top:612px" width="16" height="16" viewBox="0 0 16 16"><rect x=".5" y="1.500" width="15" height="13" fill="#fbfbfb" stroke="#8a8a8a" stroke-width=".9"/><text x="2" y="7.500" font-size="6.500" font-weight="bold" font-family="DejaVu Sans,Liberation Sans,sans-serif" fill="#111">A</text><path d="M8 5.500h6M2.500 9h11M2.500 11h11M2.500 13h11" stroke="#aaa" stroke-width=".8"/></svg>
<svg style="left:10px;top:644px" width="16" height="16" viewBox="0 0 16 16"><rect x=".5" y="4.500" width="15" height="7.500" fill="#fbfbfb" stroke="#8a8a8a" stroke-width=".9"/><text x="2" y="10.500" font-size="6.500" font-weight="bold" font-family="DejaVu Sans,Liberation Sans,sans-serif" fill="#111">A</text><path d="M8 10h5.500" stroke="#999" stroke-width=".8"/></svg>
<svg style="left:1414px;top:165px" width="16" height="16" viewBox="0 0 16 16"><defs><linearGradient id="ers" x1="0" y1="0" x2="1" y2="1"><stop offset="0" stop-color="#f7c0bc"/><stop offset="1" stop-color="#d9534f"/></linearGradient></defs><path d="M1.500 10.500L9 1.500Q10 .5 11.500 1L15 3.500Q15.500 4.500 15 5.500L8.500 13H4z" fill="url(#ers)" stroke="#c0504a" stroke-width=".8"/><path d="M1 14.500h14" stroke="#222" stroke-width="1.200"/></svg>
<svg style="left:1414px;top:197px" width="16" height="16" viewBox="0 0 16 16"><rect x="1" y="9" width="5.500" height="5.500" fill="#fff" stroke="#222" stroke-width="1"/><rect x="10" y="1" width="5" height="5" fill="#fff" stroke="#222" stroke-width="1"/><path d="M5.500 10.500L10.500 5.500" stroke="#2a5fd8" stroke-width="1.500"/><path d="M11.500 4.500l-4 .8 3.200 3.200z" fill="#2a5fd8"/></svg>
<svg style="left:1414px;top:229px" width="16" height="16" viewBox="0 0 16 16"><path d="M6.500 1.500L7 14.500H1.500z" fill="none" stroke="#333" stroke-width="1" stroke-dasharray="1.200 1.200"/><path d="M9.500 1.500L14.500 14.500H9z" fill="#e8e8e8" stroke="#222" stroke-width="1.100"/></svg>
<svg style="left:1414px;top:261px" width="16" height="16" viewBox="0 0 16 16"><rect x="1" y="9" width="5.500" height="5.500" fill="none" stroke="#555" stroke-width="1" stroke-dasharray="1.200 1.200"/><rect x="10" y="1" width="5" height="5" fill="#fff" stroke="#222" stroke-width="1"/><path d="M5.500 10.500L10.500 5.500" stroke="#2a5fd8" stroke-width="1.500"/><path d="M11.500 4.500l-4 .8 3.200 3.200z" fill="#2a5fd8"/></svg>
<svg style="left:1414px;top:293px" width="16" height="16" viewBox="0 0 16 16"><path d="M1 2.500h14v7l-6 5" fill="none" stroke="#222" stroke-width="1.300"/><path d="M1 5.500h10.500v3l-4.500 4" fill="none" stroke="#666" stroke-width="1" stroke-dasharray="1.200 1.200"/></svg>
<svg style="left:1414px;top:325px" width="16" height="16" viewBox="0 0 16 16"><rect x="1.0" y="1.0" width="3.300" height="3.300" fill="#fff" stroke="#222" stroke-width="1"/><rect x="6.3" y="1.0" width="3.300" height="3.300" fill="#fff" stroke="#222" stroke-width="1"/><rect x="11.6" y="1.0" width="3.300" height="3.300" fill="#fff" stroke="#222" stroke-width="1"/><rect x="1.0" y="6.3" width="3.300" height="3.300" fill="#fff" stroke="#222" stroke-width="1"/><rect x="6.3" y="6.3" width="3.300" height="3.300" fill="#fff" stroke="#222" stroke-width="1"/><rect x="11.6" y="6.3" width="3.300" height="3.300" fill="#fff" stroke="#222" stroke-width="1"/><rect x="1.0" y="11.6" width="3.300" height="3.300" fill="#999" stroke="#222" stroke-width="1"/><rect x="6.3" y="11.6" width="3.300" height="3.300" fill="#fff" stroke="#222" stroke-width="1"/><rect x="11.6" y="11.6" width="3.300" height="3.300" fill="#fff" stroke="#222" stroke-width="1"/></svg>
<svg style="left:1414px;top:357px" width="16" height="16" viewBox="0 0 16 16"><rect x="1" y="8" width="6.500" height="6.500" fill="none" stroke="#555" stroke-width="1" stroke-dasharray="1.200 1.200"/><rect x="8" y="6.500" width="6" height="6" fill="#fff" stroke="#222" stroke-width="1" transform="rotate(40 11 9.500)"/><path d="M4 6Q5 1.500 9.500 2.500" fill="none" stroke="#2a5fd8" stroke-width="1.500"/><path d="M11.500 4l-3.500 .5 1.500-3.500z" fill="#2a5fd8"/></svg>
<svg style="left:1414px;top:389px" width="16" height="16" viewBox="0 0 16 16"><path d="M1 1h14v14h-7M1 1v7" fill="none" stroke="#222" stroke-width="1.300"/><rect x="1" y="8.500" width="6.500" height="6.500" fill="none" stroke="#555" stroke-width="1" stroke-dasharray="1.200 1.200"/><path d="M6 10L12 4" stroke="#2a5fd8" stroke-width="1.500"/><path d="M13.500 2.500l-4.300 1 3.300 3.300z" fill="#2a5fd8"/></svg>
<svg style="left:1414px;top:421px" width="16" height="16" viewBox="0 0 16 16"><path d="M1 1h5v8h9v6h-14z" fill="#c8c8c8" stroke="#555" stroke-width="1"/><rect x="8" y="10" width="6.500" height="4.500" fill="#fff" stroke="#222" stroke-width=".8"/><path d="M8.500 12.200h3.500" stroke="#2a5fd8" stroke-width="1.400"/><path d="M14 12.200l-3-2v4z" fill="#2a5fd8"/></svg>
<svg style="left:1414px;top:453px" width="16" height="16" viewBox="0 0 16 16"><path d="M1.500 2h5.500" stroke="#111" stroke-width="2"/><path d="M14 9.500v5.500" stroke="#111" stroke-width="2"/><path d="M7 2L14 9.500" stroke="#2a5fd8" stroke-width="2"/></svg>
<svg style="left:1414px;top:485px" width="16" height="16" viewBox="0 0 16 16"><path d="M1 2h6" stroke="#111" stroke-width="1.800"/><path d="M14.500 9v6" stroke="#111" stroke-width="1.800"/><path d="M7 2Q14.500 2 14.500 9" fill="none" stroke="#2a5fd8" stroke-width="1.800"/><path d="M8.500 6.500v4M6.500 8.500h4" stroke="#111" stroke-width="1"/></svg>
<svg style="left:1414px;top:517px" width="16" height="16" viewBox="0 0 16 16"><path d="M13 2H7Q1.500 2 1.500 8Q1.500 14 7 14h6" fill="none" stroke="#111" stroke-width="1.400"/><circle cx="13.500" cy="6.500" r="1.400" fill="#2a5fd8"/></svg>
<svg style="left:1414px;top:549px" width="16" height="16" viewBox="0 0 16 16"><path d="M13 2H7Q1.500 2 1.500 8Q1.500 14 7 14h6" fill="none" stroke="#111" stroke-width="1.400"/><circle cx="13.500" cy="5.500" r="1.300" fill="#2a5fd8"/><circle cx="13.500" cy="10" r="1.300" fill="#2a5fd8"/></svg>
<svg style="left:1414px;top:580px" width="16" height="16" viewBox="0 0 16 16"><path d="M0.500 8h4M15.500 8h-4" stroke="#2a5fd8" stroke-width="1.600"/><path d="M7.500 8l-3.500-2.700v5.400zM8.500 8l3.500-2.700v5.400z" fill="#2a5fd8"/></svg>
<svg style="left:1414px;top:612px" width="16" height="16" viewBox="0 0 16 16"><path d="M1 2.500h14" stroke="#111" stroke-width="2"/><path d="M8 4v7" stroke="#2a5fd8" stroke-width="1.600" stroke-dasharray="1.500 1.300"/><path d="M8 11v4" stroke="#111" stroke-width="1.600"/></svg>
<svg style="left:1414px;top:644px" width="16" height="16" viewBox="0 0 16 16"><path d="M2 1L10.500 11M13.500 2L5 11.500" stroke="#2a5fd8" stroke-width="1.600"/><path d="M2 1L9 9" stroke="#444" stroke-width="1.600"/><circle cx="11.500" cy="12.500" r="2.200" fill="none" stroke="#d08a20" stroke-width="1.500"/><circle cx="13" cy="7" r="2.200" fill="none" stroke="#d08a20" stroke-width="1.500"/><path d="M1 14l5-3.500" stroke="#444" stroke-width="1.500"/></svg>
<svg style="left:1414px;top:676px" width="16" height="16" viewBox="0 0 16 16"><rect x="1" y="6" width="14" height="9.500" fill="url(#hat)" stroke="#8a90a0" stroke-width=".6"/><path d="M2 6.500Q5 2 9 1.500Q13 1.500 15.500 3v4Q13 9 10 8.500L8.500 7L6 9Q3.500 9 2 6.500z" fill="#f2c9a0" stroke="#a8703c" stroke-width=".8"/></svg>
<svg style="left:1414px;top:708px" width="16" height="16" viewBox="0 0 16 16"><rect x="1" y="1.500" width="9" height="9" fill="#f7e07a" stroke="#b39a2a" stroke-width=".9"/><rect x="6" y="6.500" width="9" height="8.500" fill="#cfe6f7" stroke="#7aa7c8" stroke-width=".9"/></svg>
<svg style="left:1414px;top:740px" width="16" height="16" viewBox="0 0 16 16"><path d="M1.500 9Q1 3 6 2Q11 1.500 12 6" fill="none" stroke="#111" stroke-width="1.300"/><circle cx="1.5" cy="9.5" r="1.500" fill="#ffd500" stroke="#3a3000" stroke-width=".8"/><circle cx="12" cy="6" r="1.500" fill="#ffd500" stroke="#3a3000" stroke-width=".8"/><path d="M4 9.500Q7 6 10 6Q13.500 6 15.500 7.500v4Q13 13.500 10 13L8.500 11.500L6.500 13Q4.500 12.500 4 9.500z" fill="#f2c9a0" stroke="#a8703c" stroke-width=".8"/><circle cx="6.5" cy="14" r="1.500" fill="#ffd500" stroke="#3a3000" stroke-width=".8"/></svg>
<svg style="left:1414px;top:772px" width="16" height="16" viewBox="0 0 16 16"><defs><radialGradient id="bmb" cx=".35" cy=".3" r=".7"><stop offset="0" stop-color="#999"/><stop offset="1" stop-color="#111"/></radialGradient></defs><circle cx="7" cy="10" r="5.500" fill="url(#bmb)"/><path d="M9.500 6L11.500 3.500" stroke="#333" stroke-width="1.800"/><path d="M11.500 3.500Q12.500 1.500 14 2.500" stroke="#b8860b" stroke-width="1" fill="none"/><circle cx="14" cy="2.300" r="1.300" fill="#ff7a1a"/></svg>

<!-- PROP ICONS -->
<svg style="left:76px;top:258px" width="16" height="16" viewBox="0 0 16 16"><defs><radialGradient id="glb" cx=".4" cy=".3" r=".75"><stop offset="0" stop-color="#9ad0ff"/><stop offset=".5" stop-color="#2a6fd0"/><stop offset="1" stop-color="#123a86"/></radialGradient></defs><circle cx="8" cy="7.500" r="7" fill="url(#glb)"/><path d="M3 4Q5 1.500 8 1.500Q7 4 9 5Q8 7.500 5.500 7.500Q4 6 3 4zM10 3Q12.500 3.500 13.500 6Q12 8 11 7Q10 5 10 3zM4 10Q6 9 7 11L5.500 13.500Q4 12 4 10z" fill="#3fc23f"/><rect x="5.500" y="10.500" width="9.500" height="4.500" rx="1.500" fill="#222" stroke="#eee" stroke-width=".7"/><path d="M7.500 12.700h5.500" stroke="#eee" stroke-width="1.300"/></svg>
<svg style="left:76px;top:288px" width="16" height="16" viewBox="0 0 16 16"><path d="M.5 11.5l4.500-3h10.500l-4 3z" fill="#f0ec8e" stroke="#9a973e" stroke-width=".6"/><path d="M.5 11.5v1.500h11v-1.500zM11.500 11.5l4-3v1.500l-4 3z" fill="#cdc95e" stroke="#9a973e" stroke-width=".5"/><path d="M.5 9.5l4.500-3h10.500l-4 3z" fill="#f0ec8e" stroke="#9a973e" stroke-width=".6"/><path d="M.5 9.5v1.500h11v-1.500zM11.500 9.5l4-3v1.500l-4 3z" fill="#cdc95e" stroke="#9a973e" stroke-width=".5"/><path d="M.5 7.5l4.500-3h10.500l-4 3z" fill="#f0ec8e" stroke="#9a973e" stroke-width=".6"/><path d="M.5 7.5v1.500h11v-1.500zM11.500 7.5l4-3v1.500l-4 3z" fill="#cdc95e" stroke="#9a973e" stroke-width=".5"/></svg>
<svg style="left:76px;top:318px" width="16" height="16" viewBox="0 0 16 16"><path d="M1 9Q0 14 5 15Q10 15.500 13 12Q9 14 6 12.500Q3 11 3.500 8z" fill="#3f7ae0"/><path d="M3 4.500L8 2.500L10.500 8.500L5.500 10.500z" fill="#c8ccd2" stroke="#555" stroke-width=".8"/><path d="M4 3.500Q5 0.500 7.500 2" fill="none" stroke="#555" stroke-width=".9"/><path d="M14.500 1L9.500 10.500" stroke="#e0a030" stroke-width="2.200" stroke-linecap="round"/><path d="M9.800 9.500l1.300 .7Q10.500 13 7.500 14Q9 12 9.800 9.500z" fill="#333"/></svg>
<svg style="left:76px;top:348px" width="16" height="16" viewBox="0 0 16 16"><path d="M1 3h4M6.500 3h4M12 3h3.500" stroke="#111" stroke-width="1.800"/><path d="M1 6.500h3M5.500 6.500h3M10 6.500h3M14 6.500h1.500" stroke="#111" stroke-width="1.800"/><path d="M1 10h15" stroke="#111" stroke-width="1.800" stroke-dasharray="2 1"/><path d="M1 13.500h15" stroke="#111" stroke-width="1.800" stroke-dasharray="1.300 1"/></svg>
<svg style="left:76px;top:377.5px" width="16" height="16" viewBox="0 0 16 16"><path d="M1 2.500h15" stroke="#111" stroke-width="1.600"/><path d="M1 5.500h15" stroke="#111" stroke-width="1.600" stroke-dasharray="1.500 1"/><path d="M1 8.500h15" stroke="#111" stroke-width="1.800" stroke-dasharray="3 1.200 1.200 1.200"/><path d="M1 11.500h15" stroke="#111" stroke-width="1.800" stroke-dasharray="2 1.500"/><path d="M1 14.500h15" stroke="#111" stroke-width="1.800" stroke-dasharray="1.200 1.200"/></svg>
<svg style="left:76px;top:406px" width="16" height="16" viewBox="0 0 16 16"><path d="M.5 2.500h15.500" stroke="#111" stroke-width="3.400"/><path d="M.5 7.200h15.500" stroke="#111" stroke-width="2.600"/><path d="M.5 11.200h15.500" stroke="#111" stroke-width="1.900"/><path d="M.5 14.700h15.500" stroke="#111" stroke-width="1.100"/></svg>
<svg style="left:76px;top:481px" width="16" height="16" viewBox="0 0 16 16"><rect x="1" y="3" width="11" height="12" fill="#fff" stroke="#222" stroke-width="1"/><path d="M3 7h3M3 10h2" stroke="#222" stroke-width="1.200"/><path d="M15 1L7 11" stroke="#e8b020" stroke-width="2.300" stroke-linecap="round"/><path d="M7.500 10l1 .8-2.500 2.700z" fill="#222"/></svg>
<svg style="left:76px;top:512px" width="16" height="16" viewBox="0 0 16 16"><defs><pattern id="bh" width="2" height="2" patternUnits="userSpaceOnUse" patternTransform="rotate(-45)"><rect width="2" height="2" fill="#dfe8ff"/><rect width="2" height="1" fill="#2a5fd8"/></pattern></defs><rect x=".5" y="1" width="4" height="14" fill="#e02a1a"/><rect x="6" y="1" width="4" height="14" fill="#2aa83a"/><rect x="11.500" y="1" width="4.500" height="14" fill="url(#bh)"/></svg>
<svg style="left:76px;top:541px" width="16" height="16" viewBox="0 0 16 16"><rect x=".5" y="1" width="3.500" height="14" fill="#e02a1a"/><path d="M5 1h4L5 12z" fill="#2aa83a"/><path d="M16 1v14H4z" fill="#111"/><path d="M8 11h8M10.500 8h5.500M12.500 5h3.500" stroke="#fff" stroke-width="1"/></svg>
<svg style="left:75.5px;top:609px" width="17" height="17" viewBox="0 0 17 17"><circle cx="7" cy="7" r="6.300" fill="none" stroke="#222" stroke-width="1.200"/><circle cx="7" cy="7" r="1.600" fill="#ffd500" stroke="#3a3000" stroke-width=".8"/><rect x="9.500" y="9.500" width="7" height="7" fill="#efebe5"/><text x="10.500" y="16.500" font-size="7" font-weight="bold" font-family="DejaVu Sans,Liberation Sans,sans-serif" fill="#111">X</text></svg>
<svg style="left:75.5px;top:636.5px" width="17" height="17" viewBox="0 0 17 17"><circle cx="7" cy="7" r="6.300" fill="none" stroke="#222" stroke-width="1.200"/><circle cx="7" cy="7" r="1.600" fill="#ffd500" stroke="#3a3000" stroke-width=".8"/><rect x="9.500" y="9.500" width="7" height="7" fill="#efebe5"/><text x="10.500" y="16.500" font-size="7" font-weight="bold" font-family="DejaVu Sans,Liberation Sans,sans-serif" fill="#111">Y</text></svg>
<svg style="left:75.5px;top:663.5px" width="17" height="17" viewBox="0 0 17 17"><circle cx="7" cy="7" r="6.300" fill="none" stroke="#222" stroke-width="1.200"/><circle cx="7" cy="7" r="1.600" fill="#ffd500" stroke="#3a3000" stroke-width=".8"/><rect x="9.500" y="9.500" width="7" height="7" fill="#efebe5"/><text x="10.500" y="16.500" font-size="7" font-weight="bold" font-family="DejaVu Sans,Liberation Sans,sans-serif" fill="#111">Z</text></svg>
<svg style="left:76px;top:691px" width="16" height="16" viewBox="0 0 16 16"><path d="M2 1h12M2 15h12" stroke="#111" stroke-width="1.300"/><path d="M8 3.500v9" stroke="#2a6fe0" stroke-width="1.200"/><path d="M8 2l2.200 3h-4.400zM8 14l2.200-3h-4.400z" fill="#2a6fe0"/></svg>
<svg style="left:76px;top:718px" width="16" height="16" viewBox="0 0 16 16"><path d="M1 2v12M15 2v12" stroke="#111" stroke-width="1.300"/><path d="M3.500 8h3M9.500 8h3" stroke="#2a6fe0" stroke-width="1.200"/><path d="M2 8l3-2.200v4.400zM14 8l-3-2.200v4.400z" fill="#2a6fe0"/></svg>
<div class="btn" style="left:197px;top:187px;width:20px;height:21px;border-radius:3px"></div>
<div class="btn" style="left:225px;top:187px;width:20px;height:21px;border-radius:3px"></div>
<div class="btn" style="left:253px;top:187px;width:20px;height:21px;border-radius:3px"></div>
<svg style="left:199px;top:189px" width="16" height="16" viewBox="0 0 16 16"><path d="M2 1.500v9M5 1.500v9M2 1.500h6" stroke="#333" stroke-width=".9" fill="none"/><path d="M7 3l0 9 2.200-2 1.600 3.500 1.500-.7-1.600-3.400h3z" fill="#fff" stroke="#111" stroke-width=".8"/></svg>
<svg style="left:227px;top:189px" width="16" height="16" viewBox="0 0 16 16"><rect x="1.500" y="1.500" width="9" height="7" fill="#8aa0c8" stroke="#222" stroke-width=".9"/><rect x="3" y="3" width="6" height="4" fill="#dfe6f2" stroke="#333" stroke-width=".6"/><path d="M7.5 4l0 9 2.200-2 1.600 3.500 1.500-.7-1.600-3.400h3z" fill="#fff" stroke="#111" stroke-width=".8"/></svg>
<svg style="left:255px;top:189px" width="16" height="16" viewBox="0 0 16 16"><rect x="2" y="2" width="8" height="6" fill="#9aa8c0" stroke="#444" stroke-width=".8"/><rect x="3.500" y="9" width="5" height="1.500" fill="#777"/><path d="M11 3L7.500 9h2.500L8 14.500L13.500 7.500h-2.700L12.500 3z" fill="#ffcf1a" stroke="#a87800" stroke-width=".6"/></svg>
<svg style="left:253.5px;top:152.5px" width="13" height="13" viewBox="0 0 13 13"><rect x=".5" y=".5" width="11.500" height="11.500" rx="2.500" fill="#f4f1ec" stroke="#8f887b" stroke-width="1"/><path d="M4.500 6.500v-2.500h5v5h-2.500" fill="none" stroke="#333" stroke-width="1.100"/><rect x="2.500" y="5.500" width="5" height="5" fill="#efebe5" stroke="#333" stroke-width="1.100"/></svg>
<svg style="left:270.5px;top:152.5px" width="13" height="13" viewBox="0 0 13 13"><rect x=".5" y=".5" width="11.500" height="11.500" rx="2.500" fill="#f4f1ec" stroke="#8f887b" stroke-width="1"/><path d="M3.500 3.500l5.500 5.500m0-5.500l-5.500 5.500" stroke="#333" stroke-width="1.700"/></svg>
<svg style="left:1372px;top:803px" width="13" height="13" viewBox="0 0 13 13"><rect x=".5" y=".5" width="11.500" height="11.500" rx="2.500" fill="#f4f1ec" stroke="#8f887b" stroke-width="1"/><path d="M4.500 6.500v-2.500h5v5h-2.500" fill="none" stroke="#333" stroke-width="1.100"/><rect x="2.500" y="5.500" width="5" height="5" fill="#efebe5" stroke="#333" stroke-width="1.100"/></svg>
<svg style="left:1389.5px;top:803px" width="13" height="13" viewBox="0 0 13 13"><rect x=".5" y=".5" width="11.500" height="11.500" rx="2.500" fill="#f4f1ec" stroke="#8f887b" stroke-width="1"/><path d="M3.500 3.500l5.500 5.500m0-5.500l-5.500 5.500" stroke="#333" stroke-width="1.700"/></svg>
<div class="abs" style="left:259px;top:236px;width:15px;height:528px;border:1px solid #d4cdbf;border-radius:7px;background:linear-gradient(90deg,#e3ded4,#efebe5 60%,#f3f0eb)"></div>
<div class="abs" style="left:259px;top:236px;width:15px;height:418px;border:1px solid #b9b1a2;border-radius:7px;background:linear-gradient(90deg,#fbfaf8,#f1eee8 50%,#e4dfd5)"></div>
<div class="abs" style="left:263px;top:441px;width:7px;height:7px;background:repeating-linear-gradient(#b9b1a2 0 1px,transparent 1px 3px)"></div>
<svg style="left:262px;top:223px" width="9" height="8" viewBox="0 0 9 8"><path d="M4.500 1L8 7H1z" fill="#c9c2b4"/></svg>
<svg style="left:262px;top:768px" width="9" height="8" viewBox="0 0 9 8"><path d="M4.500 7L8 1H1z" fill="#5a5146"/></svg>
<svg style="left:114px;top:320px" width="14" height="14" viewBox="0 0 14 14"><circle cx="7" cy="7" r="4.600" fill="#fff" stroke="#1a1a1a" stroke-width="1.200"/></svg>
<div class="abs" style="left:113px;top:416px;width:32px;height:1px;background:#1a1a1a"></div>
<svg style="left:0;top:878px" width="16" height="20" viewBox="0 0 16 20"><rect x=".5" y="1.500" width="15" height="16" fill="#b04fb0" stroke="#ddd" stroke-width="1"/><rect x="1" y="2" width="14" height="3.500" fill="#d9d9d9"/><rect x="3" y="8" width="4" height="4" fill="#e8c8e8"/></svg>
<div class="abs" style="left:21px;top:884px;width:4px;height:9px;background:repeating-linear-gradient(#77746c 0 1px,transparent 1px 3px)"></div>
<svg style="left:34px;top:879px" width="17" height="18" viewBox="0 0 17 18"><path d="M8.300 0.500l7.700 16.500h-8.500z" fill="#0a18f0"/><path d="M0.500 5.500c3.500-2 6.500 0 7.300 4.500 0.600 3.500-0.800 6-3.600 7.300zM3.300 8l2.200 6.500c1-1.200 1.200-2.800 0.700-4.500-0.500-1.500-1.500-2.300-2.900-2z" fill="#14e014" fill-rule="evenodd"/><text x="9.300" y="15" font-size="7" font-weight="bold" font-style="italic" fill="#fff" font-family="DejaVu Sans,Liberation Sans,sans-serif">s</text></svg>
<div class="abs" style="left:1270px;top:877px;width:35px;height:23px;background:#cfc9bd;border:1px solid #2a2927"></div>
<svg style="left:1279px;top:880px" width="17" height="18" viewBox="0 0 17 18"><path d="M8.300 0.500l7.700 16.500h-8.500z" fill="#0a18f0"/><path d="M0.500 5.500c3.500-2 6.500 0 7.300 4.500 0.600 3.500-0.800 6-3.600 7.300zM3.300 8l2.200 6.500c1-1.200 1.200-2.800 0.700-4.500-0.500-1.500-1.500-2.300-2.900-2z" fill="#14e014" fill-rule="evenodd"/><text x="9.300" y="15" font-size="7" font-weight="bold" font-style="italic" fill="#fff" font-family="DejaVu Sans,Liberation Sans,sans-serif">s</text></svg>
<div class="abs" style="left:1306px;top:877px;width:35px;height:23px;background:#22211f;border:1px solid #4a4944;border-left:none"></div>
<div class="abs" style="left:1342px;top:877px;width:35px;height:23px;background:#22211f;border:1px solid #4a4944;border-left:none"></div>
<div class="abs" style="left:1378px;top:877px;width:35px;height:23px;background:#22211f;border:1px solid #4a4944;border-left:none"></div>
<svg style="left:1416px;top:877px" width="22" height="23" viewBox="0 0 22 23"><path d="M2.500 4.500h17l-2 17.500h-13z" fill="#8a8982" stroke="#5a5953" stroke-width="1"/><ellipse cx="11" cy="4.500" rx="8.500" ry="2.300" fill="#b5b4ad" stroke="#5a5953" stroke-width="1"/><path d="M7 8l1 12M11 8v12M15 8l-1 12" stroke="#6a6963" stroke-width="1"/></svg>

<!-- DRAWING -->
<svg style="left:0;top:0" width="1440" height="900" viewBox="0 0 1440 900" shape-rendering="crispEdges" fill="none" stroke-width="1">
<style>.f{fill:#fff;stroke:none}.bf{fill:#0000ff;stroke:none}</style>
<g stroke="#fff">
<path class="f" d="M443 212h75v2.500h-75zM443 215.500h77v2h-77zM443 218.500h72v1.500h-72z"/>
<rect class="f" x="485" y="206" width="2" height="2"/>
<rect class="f" x="598" y="206" width="2" height="2"/>
<rect class="f" x="698" y="206" width="2" height="2"/>
<rect class="f" x="807" y="206" width="2" height="2"/>
<rect class="f" x="920" y="206" width="2" height="2"/>
<rect class="f" x="1024" y="206" width="2" height="2"/>
<rect class="f" x="1124" y="206" width="2" height="2"/>
<rect class="f" x="1234" y="206" width="2" height="2"/>
<rect class="f" x="485" y="752" width="2" height="2"/>
<rect class="f" x="597" y="752" width="2" height="2"/>
<rect class="f" x="704" y="752" width="2" height="2"/>
<rect class="f" x="807" y="752" width="2" height="2"/>
<rect class="f" x="910" y="752" width="2" height="2"/>
<rect class="f" x="1019" y="752" width="2" height="2"/>
<rect class="f" x="1121" y="752" width="2" height="2"/>
<rect class="f" x="1236" y="752" width="2" height="2"/>
<rect class="f" x="431" y="256" width="2" height="2"/>
<rect class="f" x="431" y="342" width="2" height="2"/>
<rect class="f" x="431" y="430" width="2" height="2"/>
<rect class="f" x="431" y="526" width="2" height="2"/>
<rect class="f" x="431" y="614" width="2" height="2"/>
<rect class="f" x="431" y="703" width="2" height="2"/>
<rect class="f" x="1286" y="250" width="2" height="2"/>
<rect class="f" x="1286" y="348" width="2" height="2"/>
<rect class="f" x="1286" y="434" width="2" height="2"/>
<rect class="f" x="1286" y="526" width="2" height="2"/>
<rect class="f" x="1286" y="614" width="2" height="2"/>
<rect class="f" x="1286" y="705" width="2" height="2"/>
<rect x="370.5" y="708.5" width="10" height="10"/>
<polyline points="375.5,713.5 375.5,647.5"/>
<polyline points="375.5,713.5 443.5,713.5"/>
<polyline points="369.5,656.5 375.5,647.5 381.5,656.5"/>
<polyline points="434.5,707.5 443.5,713.5 434.5,719.5"/>
<polyline points="369.5,630.5 375.5,637.5 381.5,630.5"/>
<polyline points="375.5,637.5 375.5,644.5"/>
<polyline points="446.5,706.5 458.5,720.5"/>
<polyline points="458.5,706.5 446.5,720.5"/>
<path class="f" d="M1224 743h9v2h-9zM1224 746h5v3h-5zM1273 743h6v6h-6z"/>
<polyline points="488.5,273 488.5,261.5 605.5,261.5 605.5,291.5"/>
<polyline points="480.5,367.5 480.5,263.5 488.5,263.5"/>
<polyline points="495.5,261.5 495.5,280"/>
<path d="M488.5 273Q489 279 495.500 281"/>
<polyline points="598.5,261.5 598.5,294"/>
<polyline points="480.5,367.5 571,367.5"/>
<polyline points="480.5,345.5 489,345.5"/>
<polyline points="480.5,351.5 489,351.5"/>
<polyline points="512.5,232 512.5,353"/>
<polyline points="530.5,242 530.5,292"/>
<polyline points="548.5,232 548.5,367"/>
<polyline points="550.5,272 550.5,367"/>
<polyline points="628.5,232 628.5,362.5"/>
<polyline points="588.5,244 588.5,293"/>
<polyline points="512.5,235.5 522,235.5"/>
<polyline points="534,235.5 548.5,235.5"/>
<path class="f" d="M512.5 235.5L517.5 234.2L517.5 236.8z"/>
<path class="f" d="M548.5 235.5L543.5 236.8L543.5 234.2z"/>
<polyline points="548.5,235.5 583,235.5"/>
<polyline points="597,235.5 628.5,235.5"/>
<path class="f" d="M548.5 235.5L553.5 234.2L553.5 236.8z"/>
<path class="f" d="M628.5 235.5L623.5 236.8L623.5 234.2z"/>
<polyline points="518,245.5 530.5,245.5"/>
<path class="f" d="M530.5 245.5L525.5 246.8L525.5 244.2z"/>
<polyline points="548.5,245.5 562,245.5"/>
<path class="f" d="M548.5 245.5L553.5 244.2L553.5 246.8z"/>
<polyline points="588.5,247.5 600,247.5"/>
<polyline points="613,247.5 628.5,247.5"/>
<path class="f" d="M588.5 247.5L593.5 246.2L593.5 248.8z"/>
<path class="f" d="M628.5 247.5L623.5 248.8L623.5 246.2z"/>
<polyline points="548,258.5 555,258.5"/>
<polyline points="548,258.5 532,270.5"/>
<polyline points="628.5,251.5 640,251.5"/>
<polyline points="628.5,251.5 541,297"/>
<path d="M490.6 231.4A77.5 77.5 0 0 0 453.0 297.8"/>
<path d="M453.0 331.4A77.5 77.5 0 0 0 469.4 379.1"/>
<polyline points="492.8,227 530.5,297.8"/>
<path class="f" d="M490.5 231.5L487.1 235.4L485.7 233.3z"/>
<polyline points="468,385 492,364.5"/>
<path class="f" d="M469.5 380.0L470.0 374.9L472.4 375.7z"/>
<polyline points="450.5,297.5 520,297.5"/>
<polyline points="450.5,331.5 520,331.5"/>
<rect class="f" x="452" y="293" width="2" height="3"/>
<rect class="f" x="452" y="300" width="2" height="3"/>
<rect class="f" x="452" y="327" width="2" height="3"/>
<rect class="f" x="452" y="334" width="2" height="3"/>
<polyline points="470.5,285.5 470.5,297.5"/>
<polyline points="470.5,311.5 470.5,324"/>
<path class="f" d="M470.5 297.5L469.2 292.5L471.8 292.5z"/>
<path class="f" d="M470.5 311.5L471.8 316.5L469.2 316.5z"/>
<polyline points="467,311.5 473,311.5"/>
<polyline points="676,311.5 700,311.5"/>
<polyline points="540.5,301.9 534.6,307.8 526.4,307.8 520.5,301.9 520.5,293.7 526.4,287.8 534.6,287.8 540.5,293.7 540.5,301.9"/>
<circle cx="530.5" cy="297.8" r="9.3"/>
<circle cx="530.5" cy="297.8" r="5.5"/>
<circle cx="530.5" cy="297.8" r="2.8"/>
<polyline points="540.5,335.5 534.6,341.4 526.4,341.4 520.5,335.5 520.5,327.3 526.4,321.4 534.6,321.4 540.5,327.3 540.5,335.5"/>
<circle cx="530.5" cy="331.4" r="9.3"/>
<circle cx="530.5" cy="331.4" r="5.5"/>
<circle cx="530.5" cy="331.4" r="2.8"/>
<ellipse cx="509" cy="269.5" rx="11" ry="5.2"/>
<ellipse cx="509" cy="269.5" rx="7" ry="3"/>
<path d="M498 270.500Q498 281 503 286L503.500 320M520 271Q519 284 510.500 290L510.500 320M500.500 286L500.500 320M504.500 290L504.500 320"/>
<path d="M521.500 272.500L545 272.500Q549.500 272.500 549.500 277M521.500 274.500L545 274.500"/>
<rect class="f" x="524" y="274" width="3" height="3"/>
<polyline points="509,339.5 505,346.4 497,346.4 493,339.5 497,332.6 505,332.6 509,339.5"/>
<circle cx="501" cy="339.5" r="5.5"/>
<path d="M488.500 345L488.500 331Q490 322 500.500 320L511.500 320"/>
<polyline points="488.5,331 490.5,353 512.5,353"/>
<polyline points="512.5,353.5 547,353.5"/>
<polyline points="512.5,355.5 547,355.5"/>
<circle cx="501" cy="364.5" r="9.7"/>
<circle cx="501" cy="364.5" r="6.3"/>
<polyline points="501.5,357 501.5,432"/>
<polyline points="515.5,333.5 551,415 554,419.5 561,419.5"/>
<polyline points="520,340 554.5,406 561,406"/>
<path class="f" d="M534.0 341.0L538.5 343.6L536.6 345.5z"/>
<polyline points="536,342 547,353"/>
<polyline points="520,392.5 533.5,392.5 512,432"/>
<ellipse cx="559" cy="357.5" rx="9" ry="8"/>
<ellipse cx="559" cy="357.5" rx="6" ry="5"/>
<path d="M550.500 345Q560 338 569 345L571 367"/>
<ellipse cx="585.5" cy="364" rx="12" ry="10"/>
<ellipse cx="585.5" cy="364" rx="8.5" ry="7"/>
<ellipse cx="585.5" cy="364" rx="5" ry="4"/>
<polyline points="562,364.5 591,390.5 597,390.5"/>
<rect x="597.5" y="394.5" width="10.5" height="12"/>
<polyline points="597.5,400.5 608,400.5"/>
<circle cx="589" cy="311.5" r="29"/>
<path d="M589 292.500L598 311.500L589 330.500L580 311.500z"/>
<circle cx="589" cy="298.5" r="2.5"/>
<circle cx="589" cy="324.5" r="2.5"/>
<circle cx="589" cy="311.5" r="7"/>
<circle cx="589" cy="311.5" r="5.3"/>
<polyline points="575,311.5 581,308.5"/>
<polyline points="575,311.5 581,314.5"/>
<polyline points="574,282.5 593,282.5"/>
<path class="f" d="M603.0 284.0L598.0 285.3L598.0 282.7z"/>
<polyline points="553.5,280 553.5,350"/>
<polyline points="556.5,280 556.5,350"/>
<polyline points="560.5,272 560.5,348"/>
<polyline points="563.5,272 563.5,348"/>
<polyline points="550.5,300.5 563.5,300.5"/>
<polyline points="550.5,322.5 563.5,322.5"/>
<polyline points="606,264.5 628.5,264.5"/>
<polyline points="606,267.5 628.5,267.5"/>
<polyline points="608.5,279.5 628.5,279.5"/>
<polyline points="608.5,290.5 628.5,290.5"/>
<polyline points="609,304.5 628.5,304.5"/>
<polyline points="598,307.5 628.5,307.5"/>
<polyline points="598,314.5 628.5,314.5"/>
<polyline points="598,317.5 628.5,317.5"/>
<polyline points="609,342.5 628.5,342.5"/>
<polyline points="608.5,279.5 608.5,342.5"/>
<polyline points="628.5,263.5 637.5,263.5 637.5,260.5 643.5,260.5 643.5,362.5 628.5,362.5"/>
<polyline points="628.5,266.5 643.5,266.5"/>
<polyline points="628.5,268.5 643.5,268.5"/>
<polyline points="628.5,293.5 643.5,293.5"/>
<polyline points="628.5,300.5 643.5,300.5"/>
<polyline points="628.5,322.5 643.5,322.5"/>
<polyline points="628.5,329.5 643.5,329.5"/>
<polyline points="628.5,352.5 643.5,352.5"/>
<polyline points="628.5,355.5 643.5,355.5"/>
<polyline points="643.5,276.5 667.5,276.5 667.5,336.5 655.5,336.5"/>
<polyline points="653.5,277.5 653.5,338.5 655.5,338.5 655.5,277.5"/>
<polyline points="655.5,285.5 667.5,285.5"/>
<polyline points="643.5,345.5 653.5,345.5 653.5,338.5"/>
<polyline points="600.5,346 600.5,357.5"/>
<polyline points="600,356.5 628.5,356.5"/>
<polyline points="600,357.5 628.5,357.5"/>
<polyline points="571,340.5 596,340.5"/>
<polyline points="575,345 600,346"/>
<polyline points="725.5,232 725.5,354.5"/>
<polyline points="786.5,232 786.5,332"/>
<polyline points="725.5,235.5 745,235.5"/>
<polyline points="760,235.5 786.5,235.5"/>
<path class="f" d="M725.5 235.5L730.5 234.2L730.5 236.8z"/>
<path class="f" d="M786.5 235.5L781.5 236.8L781.5 234.2z"/>
<polyline points="700,311.5 830.5,311.5"/>
<path d="M737 268.500Q760 260 786 260Q812 260 832 268.500Q843 280 846.500 293Q847 300 842 304Q838 311.500 842 319Q847 323 846.500 329Q843 343 831 354.500Q812 362.500 786 362.500Q760 362.500 737 354.500Q729 343 726 329Q725.500 323 730 319Q734 311.500 730 304Q725.500 300 726 293Q729 280 737 268.500z"/>
<polyline points="749.5,266.5 749.5,261.5 822.5,261.5 822.5,266.5"/>
<polyline points="755.5,261.5 755.5,266.5"/>
<polyline points="816.5,261.5 816.5,266.5"/>
<polyline points="749.5,266.5 762,266.5"/>
<polyline points="810,266.5 822.5,266.5"/>
<circle cx="739" cy="285.5" r="4"/>
<circle cx="833" cy="285.5" r="4"/>
<circle cx="739" cy="337" r="4"/>
<circle cx="833" cy="337" r="4"/>
<polyline points="820.7,316.1 818.3,324.9 813.8,332.8 807.3,339.3 799.4,343.8 790.6,346.2 781.4,346.2 772.6,343.8 764.7,339.3 758.2,332.8 753.7,324.9 751.3,316.1 751.3,306.9 753.7,298.1 758.2,290.2 764.7,283.7 772.6,279.2 781.4,276.8 790.6,276.8 799.4,279.2 807.3,283.7 813.8,290.2 818.3,298.1 820.7,306.9 820.7,316.1"/>
<circle cx="786" cy="311.5" r="27"/>
<circle cx="786" cy="311.5" r="25.5"/>
<circle cx="786" cy="311.5" r="21.3"/>
<circle cx="786" cy="311.5" r="17"/>
<circle cx="786" cy="282.5" r="3.5"/>
<rect x="777.5" y="278" width="2.5" height="8"/>
<rect x="792.5" y="278" width="2.5" height="8"/>
<polyline points="697,274.5 733.5,274.5"/>
<polyline points="697,354.5 730,354.5"/>
<polyline points="701.5,274.5 701.5,311"/>
<polyline points="701.5,320 701.5,354.5"/>
<path class="f" d="M701.5 274.5L702.8 279.5L700.2 279.5z"/>
<path class="f" d="M701.5 354.5L700.2 349.5L702.8 349.5z"/>
<polyline points="713.5,274.5 713.5,286"/>
<polyline points="713.5,295 713.5,311.5"/>
<path class="f" d="M713.5 274.5L714.8 279.5L712.2 279.5z"/>
<path class="f" d="M713.5 311.5L712.2 306.5L714.8 306.5z"/>
<polyline points="728,347.5 753,374 772,359"/>
<polyline points="732,345 746,366"/>
<polyline points="728,347.5 732,345"/>
<polyline points="803,361 806,358 809,360"/>
<polyline points="976.5,395.5 976.5,424.5"/>
<polyline points="926.5,242 926.5,356"/>
<polyline points="976.5,242 976.5,279"/>
<polyline points="926.5,245.5 944,245.5"/>
<polyline points="959,245.5 976.5,245.5"/>
<path class="f" d="M926.5 245.5L931.5 244.2L931.5 246.8z"/>
<path class="f" d="M976.5 245.5L971.5 246.8L971.5 244.2z"/>
<polyline points="959.5,260.5 959.5,293.5"/>
<polyline points="993.5,260.5 993.5,293.5"/>
<polyline points="941,264.5 993.5,264.5"/>
<path class="f" d="M959.5 264.5L964.5 263.2L964.5 265.8z"/>
<path class="f" d="M993.5 264.5L988.5 265.8L988.5 263.2z"/>
<polyline points="940,276.5 976.5,276.5"/>
<rect class="f" x="962" y="275" width="3" height="3"/><rect class="f" x="971" y="275" width="3" height="3"/>
<polyline points="903,283.5 917,283.5 957.5,293.5"/>
<path d="M979 247.300Q1002 249 1009 251M1027 256Q1045 260 1061.600 266.200"/>
<path class="f" d="M980.0 247.5L985.0 246.2L985.0 248.8z"/>
<path class="f" d="M1060.0 265.7L1054.8 265.5L1055.6 263.0z"/>
<polyline points="1061.6,266.2 1025.8,337"/>
<polyline points="1010.3,274 976.3,338.5"/>
<polyline points="1010.3,278 1018,282"/>
<polyline points="1033,289.5 1044.5,295"/>
<path class="f" d="M1012.0 279.0L1016.2 279.7L1015.0 282.0z"/>
<path class="f" d="M1043.0 294.3L1038.8 293.6L1040.0 291.3z"/>
<polyline points="858.5,294.5 957,294.5"/>
<polyline points="858.5,338.5 976,338.5"/>
<polyline points="858.5,383.5 959,383.5"/>
<polyline points="861.5,294.5 861.5,312"/>
<polyline points="861.5,321 861.5,357"/>
<polyline points="861.5,366 861.5,383.5"/>
<rect class="f" x="860" y="296" width="3" height="3"/>
<rect class="f" x="860" y="334" width="3" height="3"/>
<rect class="f" x="860" y="340" width="3" height="3"/>
<rect class="f" x="860" y="379" width="3" height="3"/>
<polyline points="899,319.5 905.5,319.5 905.5,347"/>
<polyline points="902,341.5 976,341.5"/>
<rect class="f" x="904" y="334" width="3" height="3"/><rect class="f" x="904" y="343" width="3" height="3"/>
<polyline points="939.5,317 939.5,288.5 1013.5,288.5 1013.5,304.5"/>
<polyline points="1006.5,288.5 1006.5,310"/>
<polyline points="946.5,288.5 946.5,317"/>
<polyline points="916.5,381 916.5,301.5 939.5,301.5"/>
<polyline points="916.5,303.5 939.5,303.5"/>
<polyline points="916.5,380.5 921.5,380.5"/>
<rect x="926.5" y="320.5" width="10.5" height="12"/>
<polyline points="926.5,323.5 937,323.5"/>
<rect x="926.5" y="345.5" width="10.5" height="14"/>
<polyline points="926.5,352.5 937,352.5"/>
<polyline points="926.5,332.5 926.5,345.5"/>
<path d="M955.7 301L956.2 294Q959.7 288.500 963.2 294L963.7 301"/>
<path d="M989.1 301L989.6 294Q993.1 288.500 996.6 294L997.1 301"/>
<polygon points="959,301 993,301 1003,309 1013,318 1026,337 1022,357 1017,374 996,385 975,378 955,373 942,362 932,348 930,338 936,325 946,313"/>
<clipPath id="hE"><path clip-rule="evenodd" d="M959 301 L993 301 L1003 309 L1013 318 L1026 337 L1022 357 L1017 374 L996 385 L975 378 L955 373 L942 362 L932 348 L930 338 L936 325 L946 313z M947.8 338.5a28.500 28.500 0 1 0 57 0a28.500 28.500 0 1 0 -57 0z"/></clipPath>
<path clip-path="url(#hE)" d="M796.3 398.5L916.3 278.5M800.3 398.5L920.3 278.5M804.3 398.5L924.3 278.5M808.3 398.5L928.3 278.5M812.3 398.5L932.3 278.5M816.3 398.5L936.3 278.5M820.3 398.5L940.3 278.5M824.3 398.5L944.3 278.5M828.3 398.5L948.3 278.5M832.3 398.5L952.3 278.5M836.3 398.5L956.3 278.5M840.3 398.5L960.3 278.5M844.3 398.5L964.3 278.5M848.3 398.5L968.3 278.5M852.3 398.5L972.3 278.5M856.3 398.5L976.3 278.5M860.3 398.5L980.3 278.5M864.3 398.5L984.3 278.5M868.3 398.5L988.3 278.5M872.3 398.5L992.3 278.5M876.3 398.5L996.3 278.5M880.3 398.5L1000.3 278.5M884.3 398.5L1004.3 278.5M888.3 398.5L1008.3 278.5M892.3 398.5L1012.3 278.5M896.3 398.5L1016.3 278.5M900.3 398.5L1020.3 278.5M904.3 398.5L1024.3 278.5M908.3 398.5L1028.3 278.5M912.3 398.5L1032.3 278.5M916.3 398.5L1036.3 278.5M920.3 398.5L1040.3 278.5M924.3 398.5L1044.3 278.5M928.3 398.5L1048.3 278.5M932.3 398.5L1052.3 278.5M936.3 398.5L1056.3 278.5M940.3 398.5L1060.3 278.5M944.3 398.5L1064.3 278.5M948.3 398.5L1068.3 278.5M952.3 398.5L1072.3 278.5M956.3 398.5L1076.3 278.5M960.3 398.5L1080.3 278.5M964.3 398.5L1084.3 278.5M968.3 398.5L1088.3 278.5M972.3 398.5L1092.3 278.5M976.3 398.5L1096.3 278.5M980.3 398.5L1100.3 278.5M984.3 398.5L1104.3 278.5M988.3 398.5L1108.3 278.5M992.3 398.5L1112.3 278.5M996.3 398.5L1116.3 278.5M1000.3 398.5L1120.3 278.5M1004.3 398.5L1124.3 278.5M1008.3 398.5L1128.3 278.5M1012.3 398.5L1132.3 278.5M1016.3 398.5L1136.3 278.5M1020.3 398.5L1140.3 278.5M1024.3 398.5L1144.3 278.5M1028.3 398.5L1148.3 278.5M1032.3 398.5L1152.3 278.5"/>
<circle cx="976.3" cy="338.5" r="28.5"/>
<circle cx="976.3" cy="338.5" r="22.5"/>
<circle cx="976.3" cy="338.5" r="16.7"/>
<circle cx="976.3" cy="338.5" r="25.500" stroke-dasharray="3 2"/>
<path d="M1013.500 304.500Q1027 320 1027.500 341Q1028 352 1025 360"/>
<path d="M1016 300Q1030 322 1029 345"/>
<polyline points="976.3,338.5 951,350.5 940,356"/>
<polyline points="976.3,338.5 1026,337"/>
<polyline points="976.3,338.5 996,385"/>
<polyline points="976.3,338.5 958,318"/>
<polyline points="955,330 998,330"/>
<rect class="f" x="949" y="347" width="4" height="4"/><rect class="f" x="969" y="351" width="4" height="4"/>
<polyline points="965,376.5 990,376.5"/>
<polyline points="965,386.5 996,386.5"/>
<polyline points="965,388.5 996,388.5"/>
<polyline points="956.5,372 956.5,409.5"/>
<polyline points="957.5,372 949,416"/>
<polyline points="956.5,407.5 984,407.5"/>
<path class="f" d="M956.5 407.5L961.5 406.2L961.5 408.8z"/>
<path class="f" d="M976.5 407.5L971.5 408.8L971.5 406.2z"/>
<polyline points="976.5,420.5 988.5,420.5"/>
<path class="f" d="M976.5 420.5L981.5 419.2L981.5 421.8z"/>
<polyline points="937,411 946,414 948.5,420"/>
<polyline points="1007,397.5 993,397.5 974.5,372"/>
<polyline points="891,373.5 905,373.5 931,362"/>
<polyline points="899,407.5 912,407.5 928,389.5"/>
<polyline points="934.8,364.5 918.5,374.6 944.9,401.8 957.4,392.5"/>
<polyline points="925,370.5 940,385"/>
<polyline points="944.9,401.8 950,398"/>
<circle cx="933.5" cy="393" r="1.5"/>
<polyline points="921.5,380.5 931,390"/>
<circle cx="1181" cy="268.8" r="38.7"/>
<path d="M1185 241.500L1205 250Q1209 253 1207 258L1200 277Q1198 282 1184 290Q1180 291 1168 281Q1165 278 1166.500 270L1170 258Q1174 245 1185 241.500z"/>
<path d="M1186 245L1202 252.500Q1205 255 1203.500 259L1197 275.500Q1195 280 1184 286.500Q1181 287 1171 279Q1169 276 1170 270L1173 259.500Q1177 249 1186 245z"/>
<path d="M1196 249Q1199 246 1201 250L1199 253M1180 284Q1182 280 1186 283"/>
<polyline points="1149.8,220.6 1215,251.7"/>
<polyline points="1127.2,260.2 1193.4,298.4"/>
<polyline points="1160,251.2 1216,286"/>
<polyline points="1214.4,218.7 1154.5,328"/>
<polyline points="1150.6,222 1132,258.7"/>
<polyline points="1230.7,225 1219.8,278"/>
<polyline points="1156,283 1196,303"/>
<polyline points="1158,279.5 1198,299.5"/>
<polyline points="1160,277 1183,288"/>
<polyline points="1168,232 1208,252"/>
<polyline points="1172,229 1211,248.5"/>
<polyline points="1186,246 1172,275"/>
<polyline points="1196,250 1183,281"/>
<polyline points="1173,262 1190,287"/>
<polyline points="1190,262 1202,270"/>
<polyline points="1201,218.5 1214.4,218.5"/>
<rect class="f" x="1148.500" y="222" width="3" height="4"/><rect class="f" x="1130.500" y="256" width="3" height="4"/><rect class="f" x="1170" y="233" width="3" height="4"/><rect class="f" x="1162.500" y="248" width="3" height="4"/><rect class="f" x="1199" y="240" width="3" height="3"/><rect class="f" x="1227" y="232" width="3" height="4"/><rect class="f" x="1190" y="279" width="3" height="3"/>
<polyline points="1135,278.5 1150,278.5 1175,286"/>
<polyline points="1230.7,225.5 1244,225.5"/>
<polyline points="1231,289.5 1215,289.5 1199.5,278"/>
<polyline points="1233,310.5 1220,310.5 1193.5,287.5"/>
<polyline points="1189.5,321.5 1202.5,321.5 1193.5,301.5"/>
<polyline points="1127,309.5 1138,314"/>
<polyline points="1147.5,300 1139,315.5"/>
<polyline points="1154.5,328 1167.5,330.5"/>
<rect class="f" x="1135" y="311" width="4" height="3"/><rect class="f" x="1156" y="325" width="4" height="3"/>
<polyline points="1178.5,303 1178.5,307 1184,307"/>
<g transform="translate(-92.6 136.5)"><path d="M1185 241.500L1205 250Q1209 253 1207 258L1200 277Q1198 282 1184 290Q1180 291 1168 281Q1165 278 1166.500 270L1170 258Q1174 245 1185 241.500z"/><path d="M1186 245L1202 252.500Q1205 255 1203.500 259L1197 275.500Q1195 280 1184 286.500Q1181 287 1171 279Q1169 276 1170 270L1173 259.500Q1177 249 1186 245z"/><polyline points="1186,246 1172,275"/><polyline points="1196,250 1183,281"/><polyline points="1156,283 1196,303"/><polyline points="1158,279.500 1198,299.500"/><polyline points="1168,232 1208,252"/><polyline points="1172,229 1211,248.500"/></g>
<g transform="translate(1088.400 405.300) rotate(28)"><circle cx="0" cy="0" r="38.5"/><polyline points="-28,-38 -53,-38 -53,20 -44,20 -44,26 -28,26"/><polyline points="-46,-38 -46,20"/><polyline points="-53,-30 -38,-30"/><polyline points="-28,-63.5 -13,-63.5"/><polyline points="-28,-63.5 -28,52"/><polyline points="-13,-63.5 -13,82"/><polyline points="-28,52 -13,52"/><circle cx="-21" cy="-30" r="4.5"/><circle cx="-21" cy="-30" r="2.5"/><polyline points="-13,-54 10.5,-54"/><polyline points="-13,-47 10.5,-47"/><polyline points="-13,-44 10.5,-44"/><polyline points="-13,-40 10.5,-40"/><polyline points="10.5,-65 10.5,-39"/><polyline points="10.5,-65 104,-65"/><path d="M10.500 -39Q30 -36 40 -30L34 -22Q20 -26 12 -28"/><circle cx="26" cy="-48.5" r="6.5"/><circle cx="26" cy="-48.5" r="4"/><polyline points="50,-51 50,40"/><polyline points="56,-51 56,40"/><polyline points="62,-51 62,40"/><polyline points="68,-51 68,40"/><polyline points="74,-51 74,40"/><polyline points="50,-45 62,-45"/><polyline points="64,-41 74,-41"/><polyline points="50,-36 62,-36"/><polyline points="64,-32 74,-32"/><polyline points="50,-27 62,-27"/><polyline points="64,-23 74,-23"/><polyline points="50,-18 62,-18"/><polyline points="64,-14 74,-14"/><polyline points="50,-9 62,-9"/><polyline points="64,-5 74,-5"/><polyline points="50,8 62,8"/><polyline points="64,12 74,12"/><path d="M50 -51Q53 -56 56 -51M62 -51Q65 -56 68 -51M68 -48Q71 -52 74 -48"/><circle cx="61.5" cy="16" r="9"/><circle cx="61.5" cy="16" r="7"/><circle cx="61.5" cy="16" r="4"/><path d="M50 8Q50 4 55 4L68 4Q74 4 74 8L74 24Q74 28 68 28L55 28Q50 28 50 24z"/><polyline points="95,-30 95,62"/><polyline points="99,-30 99,62"/><polyline points="104,-30 104,62"/><polyline points="108,-30 108,62"/><polyline points="113,-30 113,62"/><polyline points="118,-30 118,62"/><polyline points="104,-98 104,-30"/><polyline points="113,-98 113,-60"/><polyline points="124,-98 124,-50"/><polyline points="95,62 135,62 135,40 118,40"/><polyline points="95,47 118,47"/><ellipse cx="108" cy="-44" rx="17" ry="14"/><ellipse cx="108" cy="-44" rx="13" ry="10.5"/><ellipse cx="108" cy="-44" rx="9" ry="7"/><ellipse cx="108" cy="-44" rx="5" ry="4"/><polyline points="118,-55 126,-55 126,-30 118,-30"/><circle cx="112.4" cy="0" r="9"/><circle cx="112.4" cy="0" r="6.5"/><circle cx="112.4" cy="0" r="3.5"/><path d="M101 -6Q101 -11 106 -11L119 -11Q124 -11 124 -6L124 6Q124 11 119 11L106 11Q101 11 101 6z"/><path d="M-5 38Q8 50 20 40L26 44Q30 60 44 58L50 40"/><path d="M36 42L100 42Q108 42 108 50Q108 58 100 58L46 58Q38 58 36 42"/><polyline points="40,52 75,52"/><polyline points="40,54 100,54"/><polyline points="-13,36 40,36"/><polyline points="-13,40 44,40"/><polyline points="-13,44 20,44"/><rect x="-27" y="40" width="12" height="10"/><polyline points="-12.5,82 42,82"/><polyline points="63,82 112.4,82"/><polyline points="112.4,30 112.4,86"/><polyline points="90,-95 124.5,-95"/><polyline points="89,-83 114,-83"/></g>
<polyline points="1259,364 1241,395.5"/>
<polyline points="1197,472.8 1209.5,492.5 1224,492.5"/>
<polyline points="1151,529 1163.5,533.5"/>
<rect class="f" x="1039" y="472" width="4" height="3"/><rect class="f" x="1145" y="527" width="4" height="3"/>
<circle cx="502.3" cy="458.1" r="29"/>
<polyline points="522.3,410 505.4,440"/>
<polyline points="560,430.5 546.5,430.5 511,452.5"/>
<circle cx="503" cy="445.6" r="3.5"/>
<circle cx="503" cy="445.6" r="1.8"/>
<circle cx="503" cy="470.6" r="3.5"/>
<circle cx="503" cy="470.6" r="1.8"/>
<path d="M506 439.500L498.500 441L492 452L485.500 458L492 464L498.500 475L506 477L510 470L512 458L510 446z"/>
<path d="M498 447Q494 458 498 469M507 449Q511 458 507 467"/>
<polyline points="506,445.5 570.5,445.5"/>
<polyline points="506,470.5 570.5,470.5"/>
<polyline points="485.5,458.5 553.5,458.5"/>
<polyline points="512.5,453.5 530.5,453.5"/>
<polyline points="512.5,455.5 530.5,455.5"/>
<polyline points="512.5,461.5 530.5,461.5"/>
<polyline points="512.5,463.5 530.5,463.5"/>
<polyline points="521.5,441.5 521.5,480"/>
<polyline points="566.5,445.5 566.5,453"/>
<polyline points="566.5,461 566.5,470.5"/>
<rect class="f" x="565" y="447" width="3" height="4"/><rect class="f" x="565" y="465" width="3" height="4"/>
<polyline points="549.5,445.5 549.5,458"/>
<polyline points="549.5,470.5 549.5,484"/>
<polyline points="480.5,440 480.5,478"/>
<polyline points="462,506.5 475,506.5 498.5,475"/>
<polyline points="547,493.5 532.5,493.5 507.5,446"/>
<polyline points="491,431.5 506,439.5"/>
<polyline points="515.5,439.5 524,439.5 520,434 515.5,439.5"/>
<polyline points="506,439.5 530,441"/>
<polyline points="471.7,635.9 478.3,626.4 491.7,622.2 499.4,623.1 538.3,642 537.8,647.6 547.2,649.8 551.7,647.6 558.3,650.9 560.6,657.6 559.4,674.2 552.8,689.8 537.2,700.9 528.3,704.2 520.6,699.8 510.6,700.9 486.1,689.8 465,683.1 462.2,674.2 463.3,648.7 471.7,635.9"/>
<ellipse cx="546.5" cy="678.5" rx="15" ry="19.5" transform="rotate(20 546.5 678.5)"/>
<ellipse cx="546.5" cy="678.5" rx="12.5" ry="17" transform="rotate(20 546.5 678.5)"/>
<ellipse cx="546.5" cy="678.5" rx="10.5" ry="14.5" transform="rotate(20 546.5 678.5)"/>
<ellipse cx="546.5" cy="678.5" rx="8.5" ry="12" transform="rotate(20 546.5 678.5)"/>
<ellipse cx="546.5" cy="678.5" rx="6.5" ry="9.5" transform="rotate(20 546.5 678.5)"/>
<path d="M531 652Q526 662 527 678Q528 694 537 701"/>
<circle cx="556.5" cy="657" r="1.5"/>
<circle cx="526" cy="697" r="1.5"/>
<circle cx="551" cy="699" r="1.5"/>
<polyline points="484,627 526,647"/>
<polyline points="484.7,628.9 526.7,648.9"/>
<polyline points="485.4,630.8 527.4,650.8"/>
<polyline points="486.1,632.7 528.1,652.7"/>
<polyline points="486.8,634.6 528.8,654.6"/>
<polyline points="487.5,636.5 529.5,656.5"/>
<polyline points="488.2,638.4 530.2,658.4"/>
<polyline points="488.9,640.3 530.9,660.3"/>
<polyline points="489.6,642.2 531.6,662.2"/>
<polyline points="490.3,644.1 532.3,664.1"/>
<polyline points="491,646 533,666"/>
<polyline points="491.7,647.9 533.7,667.9"/>
<polyline points="492.4,649.8 534.4,669.8"/>
<polyline points="492,630 487,643"/>
<polyline points="497.5,632.6 492.5,645.6"/>
<polyline points="503,635.2 498,648.2"/>
<polyline points="508.5,637.8 503.5,650.8"/>
<polyline points="514,640.4 509,653.4"/>
<polyline points="519.5,643 514.5,656"/>
<polyline points="525,645.6 520,658.6"/>
<polyline points="530.5,648.2 525.5,661.2"/>
<polyline points="471.7,635.9 500,648"/>
<polyline points="463.3,648.7 474,652"/>
<circle class="f" cx="479" cy="661.500" r="4.300"/><circle class="f" cx="478" cy="676.500" r="4.300"/>
<circle cx="479" cy="661.5" r="5.5"/>
<circle cx="478" cy="676.5" r="5.5"/>
<circle cx="476.5" cy="642" r="3.6"/>
<circle cx="476.5" cy="642" r="2.2"/>
<path class="f" d="M484 628h7v5h-7zM486 634l8 3v3l-8-3z"/>
<polyline points="470,650 470,683"/>
<polyline points="488,654 488,690"/>
<polyline points="470,650 488,654"/>
<polyline points="473,651 473,684"/>
<polyline points="485,653 485,689"/>
<path d="M492 650Q497 668 493 686M495 651Q500 669 496 687M498 652Q503 670 499 688"/>
<polyline points="500,648 500,690"/>
<polyline points="500,660 520,668"/>
<polyline points="503,675 520,683"/>
<polyline points="510,655 510,695"/>
<polyline points="514,657 514,697"/>
<rect x="504" y="664" width="6" height="8"/>
<path class="f" d="M487 682l9 4-4 9-9-4zM503 689l10 4-4 9-10-4zM500 668l6-4 4 8-6 4z"/>
<polyline points="520,668 530,660"/>
<polyline points="520,683 524,690"/>
<path d="M515 650Q522 656 524 664"/>
<clipPath id="nA"><path d="M471.7 635.9 L478.3 626.4 L491.7 622.2 L499.4 623.1 L538.3 642.0 L537.8 647.6 L547.2 649.8 L551.7 647.6 L558.3 650.9 L560.6 657.6 L559.4 674.2 L552.8 689.8 L537.2 700.9 L528.3 704.2 L520.6 699.8 L510.6 700.9 L486.1 689.8 L465.0 683.1 L462.2 674.2 L463.3 648.7z"/></clipPath>
<path clip-path="url(#nA)" d="M486.3 635.5l3.4 0.0M522.1 631.2l3.5 0.0M499.5 626.8l-2.6 6.2M480.3 665.9l9.4 4.5M471.9 641.0l8.2 0.0M467.5 668.5l10.6 5.1M466.4 689.2l-2.6 6.2M501.9 667.4l10.3 0.0M476.0 668.2l4.7 0.0M470.0 678.1l3.5 0.0M477.8 675.7l-3.8 9.2M496.5 694.2l-2.2 5.2M520.2 677.1l3.4 1.6M484.6 661.6l-3.6 8.8M483.7 698.5l6.8 3.3M474.9 650.0l-2.6 6.3M532.3 629.9l8.2 0.0M526.0 647.8l6.2 0.0M498.8 684.6l9.5 4.5M531.0 660.0l3.6 0.0M515.6 647.5l11.9 0.0M522.2 645.6l-4.2 10.1M488.0 695.5l-1.7 4.2M471.4 628.5l-1.6 3.8M480.8 653.7l-1.4 3.4M495.3 665.8l9.3 4.5M525.2 645.2l-4.5 10.9M512.2 652.9l3.9 1.9M475.7 641.6l2.8 1.3M522.8 637.9l-1.2 2.8M493.2 652.1l5.9 0.0M472.0 689.3l8.9 0.0M516.3 658.7l10.2 0.0M491.3 654.3l6.6 3.2M491.8 638.5l6.3 3.0M470.9 669.7l2.7 1.3M473.9 631.7l-3.2 7.8M468.1 639.8l-1.6 4.0M481.2 650.4l-2.8 6.7M471.3 661.1l-2.8 6.7M485.5 635.0l6.1 0.0M482.1 687.0l6.9 3.3M477.8 696.4l-1.6 4.0M502.1 626.1l5.7 0.0M509.3 630.9l-2.9 7.1M528.4 651.0l7.0 3.4M519.1 649.1l7.7 3.7M519.8 681.6l9.2 4.4M521.9 680.2l4.3 2.1M498.5 679.6l9.1 4.3M497.0 638.7l11.6 0.0M495.2 695.2l-4.4 10.7M489.3 640.8l6.5 3.1M487.3 660.7l10.6 0.0M497.5 673.6l3.8 0.0M510.6 693.1l9.8 0.0M497.4 637.6l6.0 0.0M520.7 697.8l-2.7 6.6M516.5 630.5l4.1 1.9M472.1 635.5l-3.9 9.4M473.5 686.8l-3.4 8.2M488.2 665.7l2.9 1.4M520.6 679.2l7.0 3.3M530.2 657.0l9.4 4.5M478.2 643.1l-2.9 6.9M518.0 648.8l6.8 0.0M472.4 693.2l-4.2 10.2M510.7 685.9l6.8 0.0M529.1 662.1l4.4 0.0M499.8 690.3l7.6 3.6M518.9 635.4l6.5 3.1M515.2 666.3l-3.5 8.4M501.2 660.7l9.9 4.7M467.1 638.5l9.0 4.3M499.6 666.7l6.3 3.0M507.1 662.4l4.8 0.0M483.0 662.6l-2.9 7.0M480.8 663.8l-4.3 10.4M527.3 639.4l-1.6 3.9M471.8 657.6l8.1 3.9M493.8 640.2l-3.8 9.3M527.6 635.7l8.8 0.0M489.4 643.2l10.5 5.0M478.8 696.4l-4.2 10.1M474.7 674.8l4.0 1.9M494.1 663.2l-2.6 6.2M488.7 631.0l-1.2 2.9M502.9 657.5l5.8 2.8M500.3 646.5l3.6 1.7M529.1 641.4l3.4 1.6"/>
<polyline points="470,574.5 463.5,574.5 466.5,673"/>
<polyline points="491.5,593.5 485.5,593.5 478,628"/>
<polyline points="463.5,727.5 458,727.5 466.5,681.5"/>
<polyline points="511.5,728.5 505.5,728.5 493,692"/>
<polyline points="551,723.5 544.5,723.5 509.5,700.5"/>
<polyline points="586.7,654.7 590,648 597.8,645.2 607.8,647.4 610,637.4 633.3,622.4 646.7,616.3 655.6,616.9 668.9,624.7 676.7,633.6 682.2,644.7 681.1,658 672.2,665.8 651.1,680.2 634.4,685.8 632.2,695.8 624.4,701.3 605.6,693.6 591.1,684.7 586.7,670.2 586.7,654.7"/>
<ellipse cx="603.5" cy="676" rx="15" ry="18" transform="rotate(-22 603.5 676)"/>
<ellipse cx="603.5" cy="676" rx="12.5" ry="15.5" transform="rotate(-22 603.5 676)"/>
<ellipse cx="603.5" cy="676" rx="10" ry="12.5" transform="rotate(-22 603.5 676)"/>
<ellipse cx="603.5" cy="676" rx="7.5" ry="9.5" transform="rotate(-22 603.5 676)"/>
<ellipse cx="603.5" cy="676" rx="5" ry="6.5" transform="rotate(-22 603.5 676)"/>
<polyline points="597,672 612,680"/>
<polyline points="600,682 608,668"/>
<circle cx="592" cy="654" r="1.5"/>
<circle cx="625" cy="694" r="1.5"/>
<circle cx="596" cy="690" r="1.5"/>
<circle cx="625" cy="672" r="1.7"/>
<path d="M607.800 647.400Q618 652 624 662Q630 674 632.200 695.800"/>
<polyline points="612,639 644,625"/>
<polyline points="614.2,640 646.2,626"/>
<polyline points="616.4,641 648.4,627"/>
<polyline points="618.6,642 650.6,628"/>
<polyline points="620.8,643 652.8,629"/>
<polyline points="623,644 655,630"/>
<polyline points="625.2,645 657.2,631"/>
<polyline points="627.4,646 659.4,632"/>
<polyline points="629.6,647 661.6,633"/>
<polyline points="631.8,648 663.8,634"/>
<polyline points="634,649 666,635"/>
<polyline points="636.2,650 668.2,636"/>
<polyline points="620,634 627,645"/>
<polyline points="625,631.8 632,642.8"/>
<polyline points="630,629.6 637,640.6"/>
<polyline points="635,627.4 642,638.4"/>
<polyline points="640,625.2 647,636.2"/>
<polyline points="645,623 652,634"/>
<polyline points="650,620.8 657,631.8"/>
<polyline points="655,618.6 662,629.6"/>
<ellipse cx="671.7" cy="645.2" rx="7" ry="8.5" transform="rotate(-10 671.7 645.2)"/>
<ellipse cx="671.7" cy="645.2" rx="5" ry="6.3" transform="rotate(-10 671.7 645.2)"/>
<ellipse cx="671.7" cy="645.2" rx="3" ry="4" transform="rotate(-10 671.7 645.2)"/>
<ellipse cx="671.7" cy="645.2" rx="9.5" ry="11" transform="rotate(-10 671.7 645.2)"/>
<ellipse class="f" cx="648" cy="623.500" rx="4" ry="3"/>
<ellipse cx="658.5" cy="624.5" rx="4.5" ry="2.8"/>
<ellipse cx="658.5" cy="624.5" rx="3" ry="1.6"/>
<path class="f" d="M611 638h3v3h-3zM636 626h4v3h-4z"/>
<polyline points="680.5,638.5 689,634"/>
<polyline points="640,650 640,672"/>
<polyline points="632,653 632,676"/>
<polyline points="648,648 648,668"/>
<polyline points="634,662 662,650"/>
<polyline points="632,668 664,655"/>
<path d="M636 676Q648 668 660 663L652 672M640 680L668 664"/>
<polyline points="650,650 651,668"/>
<polyline points="652,649.3 653,667.3"/>
<polyline points="654,648.6 655,666.6"/>
<polyline points="656,647.9 657,665.9"/>
<polyline points="658,647.2 659,665.2"/>
<polyline points="660,646.5 661,664.5"/>
<polyline points="662,645.8 663,663.8"/>
<polyline points="664,645.1 665,663.1"/>
<path class="f" d="M670 666l6-4 2 3-6 4zM628 684l5-2 1 5-4 2z"/>
<clipPath id="nB"><path d="M586.7 654.7 L590.0 648.0 L597.8 645.2 L607.8 647.4 L610.0 637.4 L633.3 622.4 L646.7 616.3 L655.6 616.9 L668.9 624.7 L676.7 633.6 L682.2 644.7 L681.1 658.0 L672.2 665.8 L651.1 680.2 L634.4 685.8 L632.2 695.8 L624.4 701.3 L605.6 693.6 L591.1 684.7 L586.7 670.2z"/></clipPath>
<path clip-path="url(#nB)" d="M629.0 683.4l4.9 -2.3M619.1 649.6l10.4 0.0M628.1 630.5l8.1 0.0M659.0 626.3l9.2 -4.3M622.8 682.7l5.2 10.2M654.4 676.1l7.6 -3.6M625.6 638.5l6.4 -3.0M633.7 658.7l3.9 7.6M613.0 669.7l10.6 -4.9M628.3 632.7l3.9 7.7M647.2 634.4l3.4 6.7M622.5 644.3l10.8 -5.0M612.6 621.3l8.0 0.0M623.3 653.2l1.8 3.5M667.3 650.3l3.6 7.0M672.2 687.9l4.1 8.2M678.8 644.0l9.6 0.0M619.8 689.3l9.5 -4.4M611.0 663.8l3.1 6.1M613.9 666.6l4.9 9.6M656.9 639.7l8.3 -3.9M613.2 633.0l3.2 6.2M628.4 687.3l5.9 0.0M612.4 681.8l5.6 -2.6M610.1 646.7l2.5 4.9M655.9 637.4l3.4 -1.6M667.2 630.1l3.4 0.0M611.6 641.3l3.4 -1.6M677.0 679.7l8.0 -3.7M660.1 681.5l4.4 8.8M660.4 654.6l4.3 8.5M655.0 623.1l11.0 0.0M653.9 671.4l4.3 0.0M646.7 655.3l9.4 -4.4M650.9 682.5l11.6 0.0M655.0 626.0l3.8 -1.8M635.2 627.3l3.6 7.1M653.9 663.8l5.2 0.0M628.5 652.0l8.8 -4.1M645.2 657.5l7.7 0.0M662.2 653.2l9.6 -4.5M626.4 673.0l8.7 -4.1M678.3 654.6l1.7 3.3M673.7 640.1l7.7 -3.6M655.0 625.4l5.4 -2.5M655.6 668.5l8.1 0.0M610.9 624.2l5.3 10.5M617.0 635.2l2.5 5.0M646.2 652.5l4.5 8.8M679.5 658.4l5.3 10.5M675.5 621.2l1.7 3.3M645.5 689.6l2.9 5.8M674.2 685.1l7.4 -3.5M619.9 656.7l1.9 3.7M667.4 655.6l8.4 -3.9M626.2 682.8l2.9 5.8M621.1 686.5l7.1 0.0M631.1 629.8l2.9 5.7M618.5 643.2l4.4 8.7M668.7 628.4l8.5 -4.0M673.1 640.3l1.6 3.2M637.3 680.9l5.6 -2.6M640.0 639.3l5.0 -2.3M613.6 666.3l11.4 0.0M627.5 638.6l5.8 0.0M664.1 675.0l4.9 9.8M666.8 664.2l7.9 0.0M660.4 623.5l6.7 0.0M653.0 629.7l3.3 6.6M673.8 658.5l6.5 -3.0M634.1 640.8l9.6 0.0M655.7 648.4l5.1 -2.4M649.0 647.6l7.9 -3.7M615.3 655.0l3.6 7.1M641.7 643.3l3.1 6.1M648.3 637.1l5.5 -2.6M616.4 636.7l4.6 9.2M624.1 621.4l2.9 5.7M662.2 634.7l2.7 5.4M614.3 639.4l1.9 3.7M645.2 664.1l3.5 -1.6M672.8 646.9l7.0 0.0M676.8 679.4l3.7 -1.7M639.8 673.5l5.3 10.4M644.3 625.1l10.7 0.0M678.1 637.4l4.5 -2.1M620.6 688.0l10.3 -4.8M660.5 665.3l1.7 3.4M664.4 620.1l4.6 -2.1M674.4 665.2l5.2 10.4"/>
<polyline points="621,602.5 627,602.5 643.5,618.5"/>
<polyline points="653,709.5 659.5,709.5 671,669"/>
<polyline points="706.5,482.5 713,482.5 741,555"/>
<rect x="760.5" y="486.5" width="51" height="13"/>
<polyline points="758.5,498.5 813.5,498.5 813.5,500.5"/>
<polyline points="758.5,498.5 758.5,500.5"/>
<rect x="751.5" y="500.5" width="69" height="10"/>
<polyline points="725.5,525.5 725.5,510.5 846.5,510.5 846.5,525.5"/>
<polyline points="738.5,510.5 738.5,525.5"/>
<polyline points="743.5,510.5 743.5,525.5"/>
<polyline points="758.5,510.5 758.5,525.5"/>
<polyline points="762.5,510.5 762.5,525.5"/>
<polyline points="810.5,510.5 810.5,525.5"/>
<polyline points="813.5,510.5 813.5,525.5"/>
<polyline points="828.5,510.5 828.5,525.5"/>
<polyline points="833.5,510.5 833.5,525.5"/>
<polyline points="664,525.5 952.5,525.5"/>
<polyline points="668.5,525.5 668.5,595.5"/>
<polyline points="680.5,525.5 680.5,567.5"/>
<polyline points="675.5,567.5 736,567.5"/>
<polyline points="664,595.5 728.5,595.5"/>
<polyline points="721.5,525.5 721.5,538"/>
<polyline points="850.5,525.5 850.5,535"/>
<rect class="f" x="720" y="531" width="3" height="3"/><rect class="f" x="849" y="531" width="3" height="3"/>
<polyline points="738.5,525.5 738.5,555"/>
<polyline points="741.5,525.5 741.5,555"/>
<polyline points="748.5,525.5 748.5,546"/>
<polyline points="765.5,525.5 765.5,555"/>
<polyline points="769.5,525.5 769.5,560"/>
<polyline points="771.5,525.5 771.5,555"/>
<polyline points="800.5,525.5 800.5,590"/>
<polyline points="802.5,525.5 802.5,590"/>
<polyline points="806.5,525.5 806.5,590"/>
<polyline points="832.5,525.5 832.5,562"/>
<polyline points="835.5,525.5 835.5,562"/>
<polyline points="748.5,545.5 765.5,545.5"/>
<polyline points="771.5,545.5 800.5,545.5"/>
<ellipse cx="745" cy="566.5" rx="8.5" ry="11.5"/>
<ellipse cx="745" cy="566.5" rx="6" ry="9"/>
<ellipse cx="745" cy="566.5" rx="3.5" ry="5.5"/>
<polyline points="741,555.5 735.5,555.5 735.5,575.5 741,575.5"/>
<path d="M748.500 546L743 556M765.500 555Q768 559 772 556Q779 560 778 566Q777 573 771 577.500L761 576L748.500 580.500"/>
<ellipse cx="736.2" cy="595.3" rx="8" ry="10.5"/>
<ellipse cx="736.2" cy="595.3" rx="5" ry="7.5"/>
<ellipse cx="736.2" cy="595.3" rx="2.5" ry="4"/>
<rect x="744.5" y="585.5" width="3" height="22"/>
<path d="M730 586Q736 583 744 585M730 605Q736 608 744 606"/>
<polyline points="766.5,588.5 835.5,588.5"/>
<polyline points="766.5,589.5 835.5,589.5"/>
<polyline points="766.5,600.5 801.5,600.5"/>
<polyline points="766.5,603.5 801.5,603.5"/>
<polyline points="767.5,577 767.5,673.5"/>
<polyline points="769.5,577 769.5,673.5"/>
<polyline points="762.5,580 762.5,673.5"/>
<polyline points="801.5,590 801.5,611"/>
<polyline points="805.5,590 805.5,611"/>
<circle cx="821" cy="537" r="10"/>
<circle cx="821" cy="551.5" r="10"/>
<polyline points="818.5,528 818.5,560"/>
<polyline points="821.5,527 821.5,561"/>
<polyline points="824.5,528 824.5,560"/>
<polyline points="807.8,561.8 827.3,565.7"/>
<polyline points="831,561.8 835.8,589.8"/>
<polyline points="825,559.5 834,586.7"/>
<ellipse cx="817" cy="601.5" rx="7.5" ry="9"/>
<ellipse cx="817" cy="601.5" rx="4" ry="5.5"/>
<polyline points="840.5,601.5 875,601.5"/>
<polyline points="832.5,590 832.5,611"/>
<polyline points="835.5,587.5 835.5,673.5"/>
<polyline points="766.5,611.5 835,611.5"/>
<polyline points="766.5,614.5 835,614.5"/>
<rect x="725.5" y="607.5" width="19.5" height="33"/>
<polyline points="725.5,640.5 725.5,659"/>
<polyline points="744.5,640.5 744.5,673.5"/>
<path d="M728 607L730 605M745 607L747 605"/>
<ellipse cx="736.2" cy="652.4" rx="5.5" ry="8"/>
<ellipse cx="746" cy="652.4" rx="7" ry="9.5"/>
<ellipse cx="746" cy="652.4" rx="5" ry="7.5"/>
<polyline points="770.5,650.5 818.5,650.5"/>
<polyline points="770.5,654.5 818.5,654.5"/>
<path d="M752 644.500Q757 644 761 648.500Q764 650 767.500 646L771 649M752 660.500Q757 661 761 656.500Q764 655 767.500 659L771 656"/>
<rect x="818.5" y="642.5" width="9" height="20"/>
<ellipse cx="831.2" cy="652.4" rx="4" ry="8.5"/>
<ellipse cx="831.2" cy="652.4" rx="2.5" ry="6"/>
<path d="M835.6 614.5A31 31 0 1 1 798.6 658.6"/>
<polyline points="737.5,673.5 921.5,673.5"/>
<polyline points="737.5,673.5 737.5,664 744.5,664"/>
<polyline points="729,662.5 737,664"/>
<polyline points="706.5,683.5 714.5,683.5 729,662.5"/>
<polyline points="772,685.5 766,685.5 748,662.5"/>
<polyline points="863,633.5 855.5,633.5 836,612.5"/>
<polyline points="837.5,643.5 863,643.5"/>
<polyline points="868,697.5 862,697.5 835,661.5"/>
<polyline points="871.5,525.5 871.5,548"/>
<polyline points="871.5,559 871.5,601.5"/>
<polyline points="893.5,525.5 893.5,574"/>
<polyline points="893.5,585 893.5,645.5"/>
<polyline points="917.5,525.5 917.5,576"/>
<polyline points="917.5,588 917.5,671"/>
<polyline points="947.5,525.5 947.5,577"/>
<polyline points="947.5,590 947.5,644.5"/>
<polyline points="842,644.5 952.5,644.5"/>
<polyline points="842,647.5 896,647.5"/>
<polyline points="835.5,652.5 921.5,652.5"/>
<polyline points="911,683.5 917.5,683.5 917.5,673.5"/>
<rect class="f" x="870" y="527" width="3" height="4"/>
<rect class="f" x="870" y="596" width="3" height="4"/>
<rect class="f" x="892" y="527" width="3" height="4"/>
<rect class="f" x="892" y="640" width="3" height="4"/>
<rect class="f" x="916" y="527" width="3" height="4"/>
<rect class="f" x="916" y="648" width="3" height="4"/>
<rect class="f" x="946" y="527" width="3" height="4"/>
<rect class="f" x="946" y="639" width="3" height="4"/>
<polyline points="1056.5,697.5 1056.5,730"/>
<path d="M1019.0 581.3 L1092.9 581.3 L1092.9 591.0 L1090.2 594.0 L1095.1 599.0 L1099.2 604.7 L1102.5 611.0 L1104.9 617.6 L1106.4 624.5 L1106.9 631.5 L1106.4 638.5 L1104.9 645.4 L1102.5 652.0 L1099.2 658.3 L1100.0 661.7 L1095.0 668.0 L1088.0 664.0 L1086.0 669.3 L1080.4 673.1 L1074.4 676.0 L1068.0 678.1 L1061.4 679.2 L1054.7 679.5 L1048.1 678.8 L1041.6 677.2 L1041.7 674.0 L1021.7 693.3 L998.3 651.7 L1010.6 652.8 L1008.1 646.3 L1006.5 639.4 L1005.9 632.4 L1006.3 625.3 L1007.6 618.4 L1009.9 611.8 L1009.0 606.0 L1004.9 593.8 L1019.0 585.0z"/>
<clipPath id="hG"><path clip-rule="evenodd" d="M1019.0 581.3 L1092.9 581.3 L1092.9 591.0 L1090.2 594.0 L1095.1 599.0 L1099.2 604.7 L1102.5 611.0 L1104.9 617.6 L1106.4 624.5 L1106.9 631.5 L1106.4 638.5 L1104.9 645.4 L1102.5 652.0 L1099.2 658.3 L1100.0 661.7 L1095.0 668.0 L1088.0 664.0 L1086.0 669.3 L1080.4 673.1 L1074.4 676.0 L1068.0 678.1 L1061.4 679.2 L1054.7 679.5 L1048.1 678.8 L1041.6 677.2 L1041.7 674.0 L1021.7 693.3 L998.3 651.7 L1010.6 652.8 L1008.1 646.3 L1006.5 639.4 L1005.9 632.4 L1006.3 625.3 L1007.6 618.4 L1009.9 611.8 L1009.0 606.0 L1004.9 593.8 L1019.0 585.0z M1013.7 631.5a42.700 42.700 0 1 0 85.400 0a42.700 42.700 0 1 0 -85.400 0z M1050.600 582.600h12.100v5.800h-12.100z M1019.200 677.500a5.500 5.500 0 1 0 11 0a5.500 5.500 0 1 0 -11 0z"/></clipPath>
<path clip-path="url(#hG)" d="M826.4000000000001 711.5L986.4000000000001 551.5M830.4000000000001 711.5L990.4000000000001 551.5M834.4000000000001 711.5L994.4000000000001 551.5M838.4000000000001 711.5L998.4000000000001 551.5M842.4000000000001 711.5L1002.4000000000001 551.5M846.4000000000001 711.5L1006.4000000000001 551.5M850.4000000000001 711.5L1010.4000000000001 551.5M854.4000000000001 711.5L1014.4000000000001 551.5M858.4000000000001 711.5L1018.4000000000001 551.5M862.4000000000001 711.5L1022.4000000000001 551.5M866.4000000000001 711.5L1026.4 551.5M870.4000000000001 711.5L1030.4 551.5M874.4000000000001 711.5L1034.4 551.5M878.4000000000001 711.5L1038.4 551.5M882.4000000000001 711.5L1042.4 551.5M886.4000000000001 711.5L1046.4 551.5M890.4000000000001 711.5L1050.4 551.5M894.4000000000001 711.5L1054.4 551.5M898.4000000000001 711.5L1058.4 551.5M902.4000000000001 711.5L1062.4 551.5M906.4000000000001 711.5L1066.4 551.5M910.4000000000001 711.5L1070.4 551.5M914.4000000000001 711.5L1074.4 551.5M918.4000000000001 711.5L1078.4 551.5M922.4000000000001 711.5L1082.4 551.5M926.4000000000001 711.5L1086.4 551.5M930.4000000000001 711.5L1090.4 551.5M934.4000000000001 711.5L1094.4 551.5M938.4000000000001 711.5L1098.4 551.5M942.4000000000001 711.5L1102.4 551.5M946.4000000000001 711.5L1106.4 551.5M950.4000000000001 711.5L1110.4 551.5M954.4000000000001 711.5L1114.4 551.5M958.4000000000001 711.5L1118.4 551.5M962.4000000000001 711.5L1122.4 551.5M966.4000000000001 711.5L1126.4 551.5M970.4000000000001 711.5L1130.4 551.5M974.4000000000001 711.5L1134.4 551.5M978.4000000000001 711.5L1138.4 551.5M982.4000000000001 711.5L1142.4 551.5M986.4000000000001 711.5L1146.4 551.5M990.4000000000001 711.5L1150.4 551.5M994.4000000000001 711.5L1154.4 551.5M998.4000000000001 711.5L1158.4 551.5M1002.4000000000001 711.5L1162.4 551.5M1006.4000000000001 711.5L1166.4 551.5M1010.4000000000001 711.5L1170.4 551.5M1014.4000000000001 711.5L1174.4 551.5M1018.4000000000001 711.5L1178.4 551.5M1022.4000000000001 711.5L1182.4 551.5M1026.4 711.5L1186.4 551.5M1030.4 711.5L1190.4 551.5M1034.4 711.5L1194.4 551.5M1038.4 711.5L1198.4 551.5M1042.4 711.5L1202.4 551.5M1046.4 711.5L1206.4 551.5M1050.4 711.5L1210.4 551.5M1054.4 711.5L1214.4 551.5M1058.4 711.5L1218.4 551.5M1062.4 711.5L1222.4 551.5M1066.4 711.5L1226.4 551.5M1070.4 711.5L1230.4 551.5M1074.4 711.5L1234.4 551.5M1078.4 711.5L1238.4 551.5M1082.4 711.5L1242.4 551.5M1086.4 711.5L1246.4 551.5M1090.4 711.5L1250.4 551.5M1094.4 711.5L1254.4 551.5M1098.4 711.5L1258.4 551.5M1102.4 711.5L1262.4 551.5M1106.4 711.5L1266.4 551.5M1110.4 711.5L1270.4 551.5M1114.4 711.5L1274.4 551.5M1118.4 711.5L1278.4 551.5M1122.4 711.5L1282.4 551.5"/>
<circle cx="1056.4" cy="631.5" r="42.7"/>
<rect x="1050.5" y="582.5" width="12" height="6"/>
<circle cx="1024.7" cy="677.5" r="5.5"/>
<polyline points="1003,655 1013,648"/>
<polyline points="1010,668 1020,661"/>
<polyline points="1014,676 1030,664"/>
<polyline points="1000.4,565.3 1056.4,631.5"/>
<polyline points="1056.4,631.5 1088.3,692.5"/>
<polyline points="1056.4,631.5 1091.1,564.4"/>
<polyline points="1056.4,631.5 1087.6,614.2"/>
<polyline points="1076,594.7 1083,611.6"/>
<polyline points="1057.3,565.3 1019,583"/>
<rect class="f" x="1081" y="609" width="4" height="4"/>
<polyline points="1041.3,537 1066.2,581.3"/>
<polyline points="1000.4,570.7 985,583.5"/>
<polyline points="969,597 955.1,608"/>
<polyline points="1008.4,580.4 996,590.5"/>
<polyline points="981,603 969.3,612.8"/>
<rect class="f" x="998" y="569" width="4" height="4"/>
<rect class="f" x="1006" y="578" width="4" height="4"/>
<rect class="f" x="953" y="606" width="4" height="4"/>
<rect class="f" x="967" y="611" width="4" height="4"/>
<polyline points="950.7,607.1 1021.7,693.3"/>
<polyline points="966.7,614.2 1012.5,670"/>
<polyline points="1091.1,567.1 1104,573.5"/>
<polyline points="1121,582 1137.3,590.2"/>
<rect class="f" x="1091" y="566" width="4" height="4"/><rect class="f" x="1132" y="587" width="4" height="4"/>
<polyline points="1137.3,590.2 1088.3,692.5"/>
<polyline points="1092.9,591 1131.7,668.3"/>
<polyline points="1092.5,656.7 1139,680"/>
<polyline points="1150.8,655 1088.3,687.5"/>
<rect class="f" x="1125" y="664" width="4" height="4"/><rect class="f" x="1087" y="686" width="4" height="4"/>
<path d="M977.8 686.6A96 96 0 0 0 1015.8 718.5"/>
<path d="M1033.2 724.6A96 96 0 0 0 1092.4 720.5"/>
<path d="M1111.5 710.1A96 96 0 0 0 1136.9 683.8"/>
<polyline points="971.7,689 995,670"/>
<rect class="f" x="975" y="688" width="3" height="4"/><rect class="f" x="1133" y="679" width="3" height="4"/><rect class="f" x="1058" y="725" width="4" height="3"/>
<rect x="1357.5" y="641.5" width="6" height="6"/>
<path shape-rendering="auto" d="M1361.300 644.900L1361.300 658L1364.300 655.200L1367.200 661.500L1369 660.700L1366.200 654.400L1370.300 653.800z" fill="#fff" stroke="#000" stroke-width=".8"/>
</g>
<g stroke="#0000ff">
<rect x="435.5" y="211.5" width="849" height="540"/>
<rect x="435.5" y="211.5" width="117" height="10"/>
<polyline points="438.5,211.5 438.5,319.5"/>
<polyline points="441.5,221.5 441.5,319.5"/>
<polyline points="435.5,319.5 441.5,319.5"/>
<polyline points="438.5,294.5 441.5,294.5"/>
<polyline points="541.5,208 541.5,211.5"/>
<polyline points="541.5,751.5 541.5,755"/>
<polyline points="654.5,208 654.5,211.5"/>
<polyline points="654.5,751.5 654.5,755"/>
<polyline points="753.5,208 753.5,211.5"/>
<polyline points="753.5,751.5 753.5,755"/>
<polyline points="860.5,208 860.5,211.5"/>
<polyline points="860.5,751.5 860.5,755"/>
<polyline points="966.5,208 966.5,211.5"/>
<polyline points="966.5,751.5 966.5,755"/>
<polyline points="1072.5,208 1072.5,211.5"/>
<polyline points="1072.5,751.5 1072.5,755"/>
<polyline points="1178.5,208 1178.5,211.5"/>
<polyline points="1178.5,751.5 1178.5,755"/>
<polyline points="858,209 863,209"/>
<polyline points="858,754 863,754"/>
<polyline points="432,301.5 435.5,301.5"/>
<polyline points="1284.5,301.5 1288,301.5"/>
<polyline points="432,391.5 435.5,391.5"/>
<polyline points="1284.5,391.5 1288,391.5"/>
<polyline points="432,480.5 435.5,480.5"/>
<polyline points="1284.5,480.5 1288,480.5"/>
<polyline points="432,571.5 435.5,571.5"/>
<polyline points="1284.5,571.5 1288,571.5"/>
<polyline points="432,661.5 435.5,661.5"/>
<polyline points="1284.5,661.5 1288,661.5"/>
<polyline points="433,478 433,484"/>
<polyline points="1287,478 1287,484"/>
<rect x="1221.5" y="741.5" width="61" height="9"/>
<polyline points="473,311.5 676,311.5"/>
<polyline points="512,267 516.5,263"/>
<polyline points="512.9,268.7 517.4,264.7"/>
<polyline points="513.8,270.4 518.3,266.4"/>
<polyline points="514.7,272.1 519.2,268.1"/>
<polyline points="515.6,273.8 520.1,269.8"/>
<polyline points="516.5,275.5 521,271.5"/>
<polyline points="517.4,277.2 521.9,273.2"/>
<polyline points="518.3,278.9 522.8,274.9"/>
<polyline points="519.2,280.6 523.7,276.6"/>
<polyline points="520.1,282.3 524.6,278.3"/>
<polyline points="521,284 525.5,280"/>
<polyline points="521.9,285.7 526.4,281.7"/>
<polyline points="522.8,287.4 527.3,283.4"/>
<polyline points="523.7,289.1 528.2,285.1"/>
<polyline points="524.6,290.8 529.1,286.8"/>
<polyline points="525.5,292.5 530,288.5"/>
<polyline points="526.4,294.2 530.9,290.2"/>
<polyline points="527.3,295.9 531.8,291.9"/>
<polyline points="528.2,297.6 532.7,293.6"/>
<polyline points="529.1,299.3 533.6,295.3"/>
<polyline points="511.5,263 529,297"/>
<polyline points="516,262 532,294"/>
<path d="M496 365L496 331Q496 325.500 501 325.500Q506 325.500 506.500 329L524 329.500M508.500 354L508.500 362"/>
<polyline points="503,353 506,357.5"/>
<polyline points="504.35,351.83 507.35,356.33"/>
<polyline points="505.7,350.66 508.7,355.16"/>
<polyline points="507.05,349.49 510.05,353.99"/>
<polyline points="508.4,348.32 511.4,352.82"/>
<polyline points="509.75,347.15 512.75,351.65"/>
<polyline points="511.1,345.98 514.1,350.48"/>
<polyline points="512.45,344.81 515.45,349.31"/>
<polyline points="513.8,343.64 516.8,348.14"/>
<polyline points="515.15,342.47 518.15,346.97"/>
<polyline points="516.5,341.3 519.5,345.8"/>
<polyline points="517.85,340.13 520.85,344.63"/>
<polyline points="519.2,338.96 522.2,343.46"/>
<polyline points="520.55,337.79 523.55,342.29"/>
<polyline points="521.9,336.62 524.9,341.12"/>
<polyline points="523.25,335.45 526.25,339.95"/>
<polyline points="524.6,334.28 527.6,338.78"/>
<polyline points="525.95,333.11 528.95,337.61"/>
<polyline points="527.3,331.94 530.3,336.44"/>
<polyline points="528.65,330.77 531.65,335.27"/>
<polyline points="502,356 530,331"/>
<polyline points="505,358.5 532,334"/>
<polyline points="976.5,279 976.5,395.5"/>
<polyline points="1172,258.2 1216,281.3"/>
<g transform="translate(1088.400 405.300) rotate(28)"><polyline points="-57,0 146,0"/></g>
<polyline points="816.5,601.5 840.5,601.5"/>
<polyline points="735.5,652.5 831,652.5"/>
<polyline points="837.5,647.5 845,647.5"/>
<polyline points="990.5,631.5 1115,631.5"/>
<polyline points="1056.5,576 1056.5,697.5"/>
</g>
<g fill="#fff" stroke="#fff" stroke-width=".25" font-family="'DejaVu Sans','Liberation Sans',sans-serif" text-rendering="optimizeSpeed">
<text transform="translate(1236 749.5) rotate(0) scale(0.85 1)" font-size="8" text-anchor="start">100-2008</text>
<text transform="translate(523 238) rotate(0) scale(0.8 1)" font-size="7" text-anchor="start">1.40</text>
<text transform="translate(584 238) rotate(0) scale(0.8 1)" font-size="7" text-anchor="start">3.10</text>
<text transform="translate(535 248) rotate(0) scale(0.8 1)" font-size="7" text-anchor="start">.70</text>
<text transform="translate(601 250) rotate(0) scale(0.8 1)" font-size="7" text-anchor="start">1.55</text>
<text transform="translate(556 258.5) rotate(0) scale(0.62 1)" font-size="8" text-anchor="start">TIE HOLE 1</text>
<text transform="translate(641 254.5) rotate(0) scale(0.68 1)" font-size="7.5" text-anchor="start">Ø.11  THRU TO BORE</text>
<text transform="translate(455 261) rotate(-20) scale(0.75 1)" font-size="7" text-anchor="start">61.17°</text>
<text transform="translate(447 357) rotate(0) scale(0.75 1)" font-size="7" text-anchor="start">41.33°</text>
<text transform="translate(465 306.5) rotate(0) scale(0.8 1)" font-size="7" text-anchor="start">.53</text>
<text transform="translate(446 313.5) rotate(0) scale(0.7 1)" font-size="7" text-anchor="start">1.20</text>
<text transform="translate(562 409) rotate(0) scale(0.62 1)" font-size="8" text-anchor="start">TIE HOLE 2</text>
<text transform="translate(562 422.5) rotate(0) scale(0.62 1)" font-size="8" text-anchor="start">TIE HOLE 3</text>
<text transform="translate(470 394) rotate(0) scale(0.7 1)" font-size="7" text-anchor="start">8x Ø.016 ⌴.30</text>
<text transform="translate(470 403) rotate(0) scale(0.72 1)" font-size="7" text-anchor="start">✓Ø  .23  X 82°</text>
<text transform="translate(597.5 393) rotate(0) scale(0.72 1)" font-size="7.5" text-anchor="start">2X Ø.42 ▽.10</text>
<text transform="translate(609 400) rotate(0) scale(0.72 1)" font-size="7.5" text-anchor="start">Ø.75 ▽.07</text>
<text transform="translate(609 407) rotate(0) scale(0.72 1)" font-size="7.5" text-anchor="start">Ø.86 ▽.05</text>
<text transform="translate(591 286) rotate(0) scale(0.7 1)" font-size="8" text-anchor="start">H</text>
<text transform="translate(636 360.5) rotate(0) scale(0.8 1)" font-size="4.5" text-anchor="start">2.0.8</text>
<text transform="translate(746 238) rotate(0) scale(0.8 1)" font-size="7" text-anchor="start">2.75</text>
<text transform="translate(787 315) rotate(0) scale(0.8 1)" font-size="4.5" text-anchor="start">2.0.8</text>
<text transform="translate(694 319.5) rotate(0) scale(0.8 1)" font-size="7" text-anchor="start">3.13</text>
<text transform="translate(707 294) rotate(0) scale(0.8 1)" font-size="7" text-anchor="start">1.44</text>
<text transform="translate(755 361) rotate(0) scale(0.8 1)" font-size="4.5" text-anchor="start">2.0.8</text>
<text transform="translate(945 248) rotate(0) scale(0.8 1)" font-size="7" text-anchor="start">1.95</text>
<text transform="translate(927.5 267) rotate(0) scale(0.8 1)" font-size="7" text-anchor="start">1.31</text>
<text transform="translate(930.5 279) rotate(0) scale(0.8 1)" font-size="7" text-anchor="start">.66</text>
<text transform="translate(889 286.5) rotate(0) scale(0.8 1)" font-size="7" text-anchor="start">R.14</text>
<text transform="translate(1010.5 255.5) rotate(8) scale(0.75 1)" font-size="7" text-anchor="start">28.00°</text>
<text transform="translate(1020.5 288.5) rotate(26) scale(0.75 1)" font-size="7" text-anchor="start">1.63</text>
<text transform="translate(853 319.5) rotate(0) scale(0.75 1)" font-size="7" text-anchor="start">1.59</text>
<text transform="translate(853 363.5) rotate(0) scale(0.75 1)" font-size="7" text-anchor="start">1.77</text>
<text transform="translate(888.5 322) rotate(0) scale(0.8 1)" font-size="7" text-anchor="start">.15</text>
<text transform="translate(984.5 410) rotate(0) scale(0.8 1)" font-size="7" text-anchor="start">.83</text>
<text transform="translate(953.5 422.5) rotate(0) scale(0.75 1)" font-size="7" text-anchor="start">19.56°</text>
<text transform="translate(947 433) rotate(0) scale(0.72 1)" font-size="8.5" text-anchor="start">SECTION E-E</text>
<text transform="translate(1008 400) rotate(0) scale(0.8 1)" font-size="7" text-anchor="start">R.19</text>
<text transform="translate(873 376) rotate(0) scale(0.75 1)" font-size="7" text-anchor="start">R1.17</text>
<text transform="translate(882 410.5) rotate(0) scale(0.75 1)" font-size="7" text-anchor="start">R1.49</text>
<text transform="translate(1154 221) rotate(0) scale(0.72 1)" font-size="7.5" text-anchor="start">2X Ø.11 ▽.13</text>
<text transform="translate(1135 244.5) rotate(0) scale(0.75 1)" font-size="7" text-anchor="start">1.75</text>
<text transform="translate(1164 246) rotate(0) scale(0.75 1)" font-size="7" text-anchor="start">.88</text>
<text transform="translate(1112 281) rotate(0) scale(0.72 1)" font-size="7.5" text-anchor="start">2X R.17</text>
<text transform="translate(1244.5 228) rotate(0) scale(0.72 1)" font-size="7.5" text-anchor="start">R1.99</text>
<text transform="translate(1231.5 292.5) rotate(0) scale(0.72 1)" font-size="7.5" text-anchor="start">R.08</text>
<text transform="translate(1233.5 313.5) rotate(0) scale(0.72 1)" font-size="7.5" text-anchor="start">R1.47</text>
<text transform="translate(1165.5 324.5) rotate(0) scale(0.72 1)" font-size="7.5" text-anchor="start">4X R.24</text>
<text transform="translate(1137.5 323) rotate(0) scale(0.72 1)" font-size="7.5" text-anchor="start">8X .75</text>
<text transform="translate(1138 301) rotate(0) scale(0.8 1)" font-size="4.5" text-anchor="start">2.0.8</text>
<text transform="translate(1217 281) rotate(0) scale(0.8 1)" font-size="4.5" text-anchor="start">2.0.8</text>
<text transform="translate(1159.5 339.5) rotate(0) scale(0.72 1)" font-size="8.5" text-anchor="start">DETAIL F</text>
<text transform="translate(1083.5 501.5) rotate(0) scale(0.8 1)" font-size="7" text-anchor="start">4.95</text>
<text transform="translate(1202 363) rotate(0) scale(0.75 1)" font-size="7" text-anchor="start">.78</text>
<text transform="translate(1197 374.5) rotate(0) scale(0.75 1)" font-size="7" text-anchor="start">.39</text>
<text transform="translate(1258 364) rotate(0) scale(0.8 1)" font-size="4.5" text-anchor="start">2.0.8</text>
<text transform="translate(1225.5 495.5) rotate(0) scale(0.68 1)" font-size="7.5" text-anchor="start">Ø0.43 THRU</text>
<text transform="translate(1224.5 503.5) rotate(0) scale(0.66 1)" font-size="7.5" text-anchor="start">⌴Ø  .64 ▽ 0.03</text>
<text transform="translate(1165.5 541) rotate(0) scale(0.7 1)" font-size="8" text-anchor="start">G</text>
<text transform="translate(561 433.5) rotate(0) scale(0.72 1)" font-size="7.5" text-anchor="start">R.29</text>
<text transform="translate(561 460.5) rotate(0) scale(0.72 1)" font-size="7.5" text-anchor="start">.98</text>
<text transform="translate(544.5 467.5) rotate(0) scale(0.72 1)" font-size="7.5" text-anchor="start">.49</text>
<text transform="translate(471 460.5) rotate(0) scale(0.8 1)" font-size="4.5" text-anchor="start">2.0.8</text>
<text transform="translate(439 509.5) rotate(0) scale(0.72 1)" font-size="7" text-anchor="start">8x R.20</text>
<text transform="translate(488.5 503) rotate(0) scale(0.68 1)" font-size="9.5" text-anchor="start">DETAIL H</text>
<text transform="translate(547.5 496.5) rotate(0) scale(0.68 1)" font-size="7.5" text-anchor="start">Ø0.12 THRU</text>
<text transform="translate(547.5 504) rotate(0) scale(0.68 1)" font-size="7.5" text-anchor="start">⌴Ø  .56 ▽0.13</text>
<text transform="translate(470 575) rotate(0) scale(0.7 1)" font-size="7" text-anchor="start">BOSS E</text>
<text transform="translate(491.5 594) rotate(0) scale(0.7 1)" font-size="7" text-anchor="start">BOSS D</text>
<text transform="translate(463.5 730.5) rotate(0) scale(0.7 1)" font-size="7" text-anchor="start">BOSS F</text>
<text transform="translate(511.5 731) rotate(0) scale(0.7 1)" font-size="7" text-anchor="start">BOSS G</text>
<text transform="translate(552 726) rotate(0) scale(0.7 1)" font-size="8" text-anchor="start">BOSS H</text>
<text transform="translate(599.5 604) rotate(0) scale(0.7 1)" font-size="7" text-anchor="start">BOSS A</text>
<text transform="translate(633 711) rotate(0) scale(0.7 1)" font-size="7" text-anchor="start">BOSS B</text>
<text transform="translate(677 484) rotate(0) scale(0.7 1)" font-size="8.5" text-anchor="start">BOSS H</text>
<text transform="translate(670 549.5) rotate(0) scale(0.72 1)" font-size="8.5" text-anchor="start">1.6500</text>
<text transform="translate(655 563.5) rotate(0) scale(0.72 1)" font-size="8.5" text-anchor="start">2.7304</text>
<text transform="translate(719 546.5) rotate(0) scale(0.7 1)" font-size="9" text-anchor="start">E</text>
<text transform="translate(847.5 545) rotate(0) scale(0.7 1)" font-size="9" text-anchor="start">E</text>
<text transform="translate(754.5 520.5) rotate(0) scale(0.8 1)" font-size="4.5" text-anchor="start">2.0.8</text>
<text transform="translate(785.5 581) rotate(0) scale(0.8 1)" font-size="4.5" text-anchor="start">2.0.8</text>
<text transform="translate(785.5 599.5) rotate(0) scale(0.8 1)" font-size="4.5" text-anchor="start">2.0.8</text>
<text transform="translate(760.5 654) rotate(0) scale(0.8 1)" font-size="4.5" text-anchor="start">2.0.8</text>
<text transform="translate(687 685.5) rotate(0) scale(0.7 1)" font-size="7.5" text-anchor="start">BOSS E</text>
<text transform="translate(772 688.5) rotate(0) scale(0.7 1)" font-size="7.5" text-anchor="start">BOSS F</text>
<text transform="translate(863 634.5) rotate(0) scale(0.7 1)" font-size="7" text-anchor="start">BOSS C</text>
<text transform="translate(863 643.5) rotate(0) scale(0.7 1)" font-size="7" text-anchor="start">BOSS A</text>
<text transform="translate(869 698.5) rotate(0) scale(0.7 1)" font-size="7" text-anchor="start">BOSS B</text>
<text transform="translate(863.5 557) rotate(0) scale(0.75 1)" font-size="7.5" text-anchor="start">2.95</text>
<text transform="translate(886.5 583) rotate(0) scale(0.75 1)" font-size="7.5" text-anchor="start">4.75</text>
<text transform="translate(905.5 585.5) rotate(0) scale(0.72 1)" font-size="7.5" text-anchor="start">2X 4.95</text>
<text transform="translate(936.5 588.5) rotate(0) scale(0.72 1)" font-size="9" text-anchor="start">4.6138</text>
<text transform="translate(889.5 686) rotate(0) scale(0.75 1)" font-size="8" text-anchor="start">0.8000</text>
<text transform="translate(1031 536) rotate(0) scale(0.75 1)" font-size="7.5" text-anchor="start">2.15</text>
<text transform="translate(971 592) rotate(0) scale(0.75 1)" font-size="7.5" text-anchor="start">2.55</text>
<text transform="translate(982 599.5) rotate(0) scale(0.75 1)" font-size="7.5" text-anchor="start">2.25</text>
<text transform="translate(1107 582.5) rotate(0) scale(0.75 1)" font-size="7.5" text-anchor="start">2.08</text>
<text transform="translate(1151 654.5) rotate(0) scale(0.75 1)" font-size="7.5" text-anchor="start">1.93</text>
<text transform="translate(980.5 706) rotate(0) scale(0.72 1)" font-size="7.5" text-anchor="start">50.14°</text>
<text transform="translate(1093 716) rotate(0) scale(0.72 1)" font-size="7.5" text-anchor="start">61.86°</text>
<text transform="translate(1029.5 737.5) rotate(0) scale(0.7 1)" font-size="9.5" text-anchor="start">SECTION G-G</text>
</g>
</svg>
</body></html>
